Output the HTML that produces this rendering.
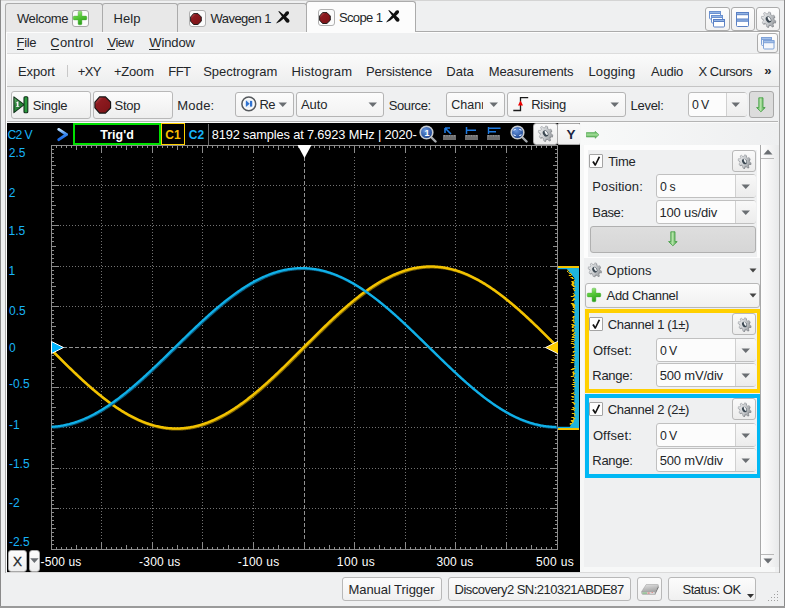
<!DOCTYPE html>
<html><head><meta charset="utf-8"><style>
html,body{margin:0;padding:0;}
body{width:785px;height:608px;overflow:hidden;position:relative;background:#eff0f1;font-family:"Liberation Sans", sans-serif;}
.t{position:absolute;white-space:nowrap;line-height:16px;}
</style></head><body>
<div style="position:absolute;left:0;top:0;width:785px;height:1px;background:#d4d4d4"></div><div style="position:absolute;left:0px;top:0px;width:1px;height:608px;background:#8a8a8a"></div><div style="position:absolute;left:784px;top:0px;width:1px;height:608px;background:#8a8a8a"></div><div style="position:absolute;left:0px;top:606px;width:785px;height:2px;background:#9a9a9a"></div><div style="position:absolute;left:5px;top:31px;width:775px;height:1px;background:#ababab"></div><div style="position:absolute;left:5px;top:31px;width:1px;height:542px;background:#ababab"></div><div style="position:absolute;left:779px;top:31px;width:1px;height:542px;background:#ababab"></div><div style="position:absolute;left:6px;top:32px;width:773px;height:1px;background:#fdfdfd"></div><div style="position:absolute;left:6px;top:32px;width:1px;height:540px;background:#fdfdfd"></div><div style="position:absolute;left:5px;top:3px;width:98px;height:29px;background:#e8e8e8;border:1px solid #ababab;border-bottom:none;border-radius:3px 3px 0 0;box-sizing:border-box"></div><div style="position:absolute;left:102px;top:3px;width:76px;height:29px;background:#e8e8e8;border:1px solid #ababab;border-bottom:none;border-radius:3px 3px 0 0;box-sizing:border-box"></div><div style="position:absolute;left:177px;top:3px;width:130px;height:29px;background:#e8e8e8;border:1px solid #ababab;border-bottom:none;border-radius:3px 3px 0 0;box-sizing:border-box"></div><div style="position:absolute;left:306px;top:1px;width:110px;height:31px;background:#fcfcfc;border:1px solid #ababab;border-bottom:none;border-radius:3px 3px 0 0;box-sizing:border-box"></div><div style="position:absolute;left:307px;top:31px;width:108px;height:2px;background:#fcfcfc"></div><div class="t" style="left:17.00px;top:10.50px;font-size:13.00px;color:#232629;letter-spacing:-0.412px;">Welcome</div><div class="t" style="left:113.56px;top:10.50px;font-size:13.00px;color:#232629;letter-spacing:0.058px;">Help</div><div class="t" style="left:210.40px;top:10.50px;font-size:13.00px;color:#232629;letter-spacing:-0.510px;">Wavegen 1</div><div class="t" style="left:338.88px;top:9.50px;font-size:13.00px;color:#232629;letter-spacing:-0.600px;">Scope 1</div><div style="position:absolute;left:72px;top:10px;width:17px;height:17px;box-sizing:border-box;border:1px solid #a8a8a8;border-radius:3px;background:#fbfbfb"><svg width="16" height="16" viewBox="0 0 16 16" style="position:absolute;left:-0.8px;top:-1.5px">
<defs><linearGradient id="pg1" x1="0" y1="0" x2="0.4" y2="1"><stop offset="0" stop-color="#b8f0a0"/><stop offset="0.45" stop-color="#5ccc3c"/><stop offset="1" stop-color="#2ca01c"/></linearGradient></defs>
<path d="M6.1 2.2 Q6.1 1.2 7.1 1.2 H8.9 Q9.9 1.2 9.9 2.2 V6.1 H13.8 Q14.8 6.1 14.8 7.1 V8.9 Q14.8 9.9 13.8 9.9 H9.9 V13.8 Q9.9 14.8 8.9 14.8 H7.1 Q6.1 14.8 6.1 13.8 V9.9 H2.2 Q1.2 9.9 1.2 8.9 V7.1 Q1.2 6.1 2.2 6.1 H6.1 Z" fill="url(#pg1)" stroke="#44a830" stroke-width="0.4"/></svg></div><div style="position:absolute;left:189px;top:10px;width:17px;height:17px;box-sizing:border-box;border:1px solid #b0b0b0;border-radius:3px;background:#fbfbfb"><svg width="12" height="12" viewBox="0 0 12 12" style="position:absolute;left:-0.4px;top:2px">
<defs><linearGradient id="rg1" x1="0" y1="0" x2="0.8" y2="0.9"><stop offset="0" stop-color="#d07070"/><stop offset="0.35" stop-color="#8e1a20"/><stop offset="1" stop-color="#7e1418"/></linearGradient></defs>
<path d="M3.6 0.6 H7.9 L11.3 4 V8.2 L7.9 11.5 H3.6 L0.6 8.2 V4 Z" fill="url(#rg1)" stroke="#111" stroke-width="0.9"/></svg></div><div style="position:absolute;left:318px;top:9px;width:17px;height:17px;box-sizing:border-box;border:1px solid #b0b0b0;border-radius:3px;background:#fbfbfb"><svg width="12" height="12" viewBox="0 0 12 12" style="position:absolute;left:-0.4px;top:2px">
<defs><linearGradient id="rg2" x1="0" y1="0" x2="0.8" y2="0.9"><stop offset="0" stop-color="#d07070"/><stop offset="0.35" stop-color="#8e1a20"/><stop offset="1" stop-color="#7e1418"/></linearGradient></defs>
<path d="M3.6 0.6 H7.9 L11.3 4 V8.2 L7.9 11.5 H3.6 L0.6 8.2 V4 Z" fill="url(#rg2)" stroke="#111" stroke-width="0.9"/></svg></div><svg width="15" height="13" viewBox="0 0 15 13" style="position:absolute;left:276px;top:11px">
<path d="M2.2 0.3 L3.4 0.2 L12.6 8.0 Q14.4 10.2 12.6 11.6 Q10.8 12.4 9.6 10.4 Z" fill="#111"/>
<path d="M11.4 0.3 Q13.6 0.2 13 2.6 Q12.4 4 10.6 5.2 L4.2 10.6 L0.2 12.4 L0.8 11.2 L8.6 2.4 Q9.8 0.4 11.4 0.3 Z" fill="#111"/></svg><svg width="15" height="13" viewBox="0 0 15 13" style="position:absolute;left:386px;top:10px">
<path d="M2.2 0.3 L3.4 0.2 L12.6 8.0 Q14.4 10.2 12.6 11.6 Q10.8 12.4 9.6 10.4 Z" fill="#111"/>
<path d="M11.4 0.3 Q13.6 0.2 13 2.6 Q12.4 4 10.6 5.2 L4.2 10.6 L0.2 12.4 L0.8 11.2 L8.6 2.4 Q9.8 0.4 11.4 0.3 Z" fill="#111"/></svg><div style="position:absolute;left:705px;top:7px;width:25px;height:24px;box-sizing:border-box;border:1px solid #ababab;border-radius:3px;background:linear-gradient(#fdfdfd,#f2f2f2)"><svg width="22" height="22" viewBox="0 0 22 22" style="position:absolute;left:0;top:0">
<g stroke="#6a90d0" stroke-width="1">
<rect x="3.5" y="3.5" width="11" height="7.5" rx="1" fill="#fff"/><rect x="3.5" y="3.5" width="11" height="2" fill="#92b4e4"/>
<rect x="5.5" y="7.5" width="11" height="7.5" rx="1" fill="#fff"/><rect x="5.5" y="7.5" width="11" height="2" fill="#92b4e4"/>
<rect x="7.5" y="11.5" width="11" height="7.5" rx="1" fill="#fff" stroke="#5a80c4"/><rect x="7.5" y="11.5" width="11" height="2" fill="#92b4e4" stroke="#5a80c4"/>
</g></svg></div><div style="position:absolute;left:731px;top:7px;width:24px;height:24px;box-sizing:border-box;border:1px solid #ababab;border-radius:3px;background:linear-gradient(#fdfdfd,#f2f2f2)"><svg width="22" height="22" viewBox="0 0 22 22" style="position:absolute;left:0;top:0">
<g stroke="#5a80c4" stroke-width="1">
<rect x="4.5" y="4.5" width="12" height="14" rx="1" fill="#fff"/>
<rect x="4.5" y="4.5" width="12" height="2.2" fill="#92b4e4"/><rect x="4.5" y="11" width="12" height="2.2" fill="#92b4e4"/>
</g></svg></div><div style="position:absolute;left:756px;top:7px;width:24px;height:24px;box-sizing:border-box;border:1px solid #ababab;border-radius:3px;background:linear-gradient(#fdfdfd,#f2f2f2)"><svg width="17" height="17" viewBox="0 0 17 17" style="position:absolute;left:2.5px;top:2.5px"><defs><linearGradient id="gtr" x1="0.1" y1="0" x2="0.9" y2="1"><stop offset="0" stop-color="#f4f5f6"/><stop offset="0.5" stop-color="#c8cbce"/><stop offset="1" stop-color="#8c9094"/></linearGradient></defs><g transform="translate(0.5 0.7)"><path d="M5.87 -1.41 L7.92 -1.06 L7.92 1.06 L5.87 1.41 L5.15 3.15 L6.35 4.85 L4.85 6.35 L3.15 5.15 L1.41 5.87 L1.06 7.92 L-1.06 7.92 L-1.41 5.87 L-3.15 5.15 L-4.85 6.35 L-6.35 4.85 L-5.15 3.15 L-5.87 1.41 L-7.92 1.06 L-7.92 -1.06 L-5.87 -1.41 L-5.15 -3.15 L-6.35 -4.85 L-4.85 -6.35 L-3.15 -5.15 L-1.41 -5.87 L-1.06 -7.92 L1.06 -7.92 L1.41 -5.87 L3.15 -5.15 L4.85 -6.35 L6.35 -4.85 L5.15 -3.15Z" transform="translate(8.50 8.50) rotate(-32) scale(0.86 1)" fill="#5e6266" opacity="0.8"/></g><path d="M5.87 -1.41 L7.92 -1.06 L7.92 1.06 L5.87 1.41 L5.15 3.15 L6.35 4.85 L4.85 6.35 L3.15 5.15 L1.41 5.87 L1.06 7.92 L-1.06 7.92 L-1.41 5.87 L-3.15 5.15 L-4.85 6.35 L-6.35 4.85 L-5.15 3.15 L-5.87 1.41 L-7.92 1.06 L-7.92 -1.06 L-5.87 -1.41 L-5.15 -3.15 L-6.35 -4.85 L-4.85 -6.35 L-3.15 -5.15 L-1.41 -5.87 L-1.06 -7.92 L1.06 -7.92 L1.41 -5.87 L3.15 -5.15 L4.85 -6.35 L6.35 -4.85 L5.15 -3.15Z" transform="translate(8.50 8.50) rotate(-32) scale(0.86 1)" fill="url(#gtr)" stroke="#9a9ea2" stroke-width="0.6" stroke-linejoin="round"/><g transform="translate(8.50 8.50) rotate(-32) scale(0.86 1)"><ellipse cx="0" cy="0" rx="2.89" ry="3.32" fill="#3c4852"/><ellipse cx="1.10" cy="-0.14" rx="1.30" ry="2.46" fill="#f2f4f6"/></g></svg></div><div style="position:absolute;left:7px;top:33px;width:772px;height:21px;background:#eff0f1"></div><div style="position:absolute;left:7px;top:53px;width:772px;height:1px;background:#dcdcdc"></div><div class="t" style="left:16.56px;top:35.10px;font-size:13.00px;color:#232629;letter-spacing:-0.346px;">File</div><div class="t" style="left:50.35px;top:35.10px;font-size:13.00px;color:#232629;letter-spacing:0.175px;">Control</div><div class="t" style="left:107.50px;top:35.10px;font-size:13.00px;color:#232629;letter-spacing:-0.515px;">View</div><div class="t" style="left:149.30px;top:35.10px;font-size:13.00px;color:#232629;letter-spacing:-0.128px;">Window</div><div style="position:absolute;left:17px;top:49px;width:7px;height:1px;background:#232629"></div><div style="position:absolute;left:51px;top:49px;width:8px;height:1px;background:#232629"></div><div style="position:absolute;left:107px;top:49px;width:8px;height:1px;background:#232629"></div><div style="position:absolute;left:149px;top:49px;width:11px;height:1px;background:#232629"></div><div style="position:absolute;left:757px;top:33px;width:21px;height:20px;box-sizing:border-box;border:1px solid #ababab;border-radius:3px;background:linear-gradient(#fdfdfd,#f2f2f2)"><svg width="19" height="18" viewBox="0 0 19 18" style="position:absolute;left:0;top:0">
<g stroke="#7ea2d8" stroke-width="1">
<rect x="3.5" y="3.5" width="10" height="8" rx="1" fill="#eef3fb"/><rect x="3.5" y="3.5" width="10" height="2" fill="#a4c0e8"/>
<rect x="5.5" y="6.5" width="10.5" height="8.5" rx="1" fill="#f4f7fc"/><rect x="5.5" y="6.5" width="10.5" height="2.2" fill="#a4c0e8"/>
</g></svg></div><div style="position:absolute;left:7px;top:54px;width:772px;height:32px;background:linear-gradient(#fbfbfb,#eceded)"></div><div style="position:absolute;left:7px;top:86px;width:772px;height:1px;background:#c4c4c4"></div><div style="position:absolute;left:67px;top:65px;width:1px;height:12px;background:#c8c8c8"></div><div class="t" style="left:17.96px;top:63.50px;font-size:13.00px;color:#232629;letter-spacing:-0.112px;">Export</div><div class="t" style="left:77.78px;top:63.50px;font-size:13.00px;color:#232629;letter-spacing:-0.600px;">+XY</div><div class="t" style="left:113.88px;top:63.50px;font-size:13.00px;color:#232629;letter-spacing:-0.171px;">+Zoom</div><div class="t" style="left:168.36px;top:63.50px;font-size:13.00px;color:#232629;letter-spacing:-0.600px;">FFT</div><div class="t" style="left:203.18px;top:63.50px;font-size:13.00px;color:#232629;letter-spacing:-0.038px;">Spectrogram</div><div class="t" style="left:291.56px;top:63.50px;font-size:13.00px;color:#232629;letter-spacing:0.153px;">Histogram</div><div class="t" style="left:366.06px;top:63.50px;font-size:13.00px;color:#232629;letter-spacing:-0.181px;">Persistence</div><div class="t" style="left:446.26px;top:63.50px;font-size:13.00px;color:#232629;letter-spacing:0.010px;">Data</div><div class="t" style="left:488.66px;top:63.50px;font-size:13.00px;color:#232629;letter-spacing:-0.095px;">Measurements</div><div class="t" style="left:588.56px;top:63.50px;font-size:13.00px;color:#232629;letter-spacing:0.084px;">Logging</div><div class="t" style="left:651.00px;top:63.50px;font-size:13.00px;color:#232629;letter-spacing:-0.245px;">Audio</div><div class="t" style="left:698.44px;top:63.50px;font-size:13.00px;color:#232629;letter-spacing:-0.480px;">X Cursors</div><div class="t" style="left:764.28px;top:63.00px;font-size:13.00px;color:#232629;font-weight:bold;letter-spacing:0.000px;">&#187;</div><div style="position:absolute;left:7px;top:87px;width:772px;height:36px;background:#eff0f1"></div><div style="position:absolute;left:11px;top:91px;width:80px;height:28px;box-sizing:border-box;border:1px solid #b8b8b8;border-radius:3px;background:linear-gradient(#fcfcfc,#eeeeee)"></div><svg width="17" height="18" viewBox="0 0 17 18" style="position:absolute;left:13px;top:95.5px">
<defs><linearGradient id="sgg" x1="0" y1="0" x2="1" y2="1"><stop offset="0" stop-color="#7cbf7c"/><stop offset="0.35" stop-color="#2a8a3a"/><stop offset="1" stop-color="#1e7a2e"/></linearGradient></defs>
<path d="M0.9 0.9 L11.2 8.6 L0.9 16.6 Z" fill="url(#sgg)" stroke="#10301a" stroke-width="1.1" stroke-linejoin="round"/>
<rect x="11" y="0.8" width="3.8" height="16" rx="1" fill="#2a9a3c" stroke="#10301a" stroke-width="1.1"/>
<path d="M2.9 6.6 L4.6 5.3 H5.6 V10 H6.3 V11 H2.9 V10 H3.7 V7 L3 7.4 Z" fill="#fff" stroke="#244a2a" stroke-width="0.25"/></svg><div class="t" style="left:32.78px;top:97.60px;font-size:13.00px;color:#232629;letter-spacing:-0.289px;">Single</div><div style="position:absolute;left:93px;top:91px;width:80px;height:28px;box-sizing:border-box;border:1px solid #b8b8b8;border-radius:3px;background:linear-gradient(#fcfcfc,#eeeeee)"></div><svg width="18" height="18" viewBox="0 0 18 18" style="position:absolute;left:93.5px;top:95.5px">
<defs><linearGradient id="stg" x1="0" y1="0" x2="0.8" y2="0.9"><stop offset="0" stop-color="#d07070"/><stop offset="0.35" stop-color="#8e1a20"/><stop offset="1" stop-color="#7e1418"/></linearGradient></defs>
<path d="M5.6 0.9 H11.4 L16.6 6.1 V11.9 L11.4 17.1 H5.6 L0.9 11.9 V6.1 Z" fill="url(#stg)" stroke="#111" stroke-width="1.1"/></svg><div class="t" style="left:114.48px;top:97.60px;font-size:13.00px;color:#232629;letter-spacing:-0.251px;">Stop</div><div class="t" style="left:177.36px;top:97.60px;font-size:13.00px;color:#232629;letter-spacing:0.163px;">Mode:</div><div style="position:absolute;left:235px;top:92px;width:59px;height:25px;box-sizing:border-box;border:1px solid #b4b4b4;border-radius:3px;background:linear-gradient(#fcfcfc,#f2f2f2)"></div><div class="t" style="left:259.56px;top:96.60px;font-size:13.00px;color:#232629;letter-spacing:-0.600px;">Re</div><svg width="10" height="6" viewBox="0 0 10 6" style="position:absolute;left:278px;top:102px"><path d="M0.5 0.5 H9 L4.75 5 Z" fill="#6a6e72"/></svg><svg width="17" height="17" viewBox="0 0 17 17" style="position:absolute;left:240px;top:96px">
<circle cx="8.8" cy="7.9" r="6.9" fill="#fafafa" stroke="#55595d" stroke-width="1.5"/>
<circle cx="8.7" cy="7.9" r="4.2" fill="#e8f0fa"/><path d="M5.9 4.2 L9.7 7.7 L5.9 11.1 Z" fill="#2f72d0"/><rect x="10" y="4.9" width="2.2" height="5.7" fill="#2f72d0"/></svg><div style="position:absolute;left:296px;top:92px;width:88px;height:25px;box-sizing:border-box;border:1px solid #b4b4b4;border-radius:3px;background:linear-gradient(#fcfcfc,#f2f2f2)"></div><div class="t" style="left:300.90px;top:96.60px;font-size:13.00px;color:#232629;letter-spacing:-0.024px;">Auto</div><svg width="10" height="6" viewBox="0 0 10 6" style="position:absolute;left:368px;top:102px"><path d="M0.5 0.5 H9 L4.75 5 Z" fill="#6a6e72"/></svg><div class="t" style="left:388.68px;top:97.60px;font-size:13.00px;color:#232629;letter-spacing:-0.390px;">Source:</div><div style="position:absolute;left:446px;top:92px;width:59px;height:25px;box-sizing:border-box;border:1px solid #b4b4b4;border-radius:3px;background:linear-gradient(#fcfcfc,#f2f2f2)"></div><svg width="10" height="6" viewBox="0 0 10 6" style="position:absolute;left:489px;top:102px"><path d="M0.5 0.5 H9 L4.75 5 Z" fill="#6a6e72"/></svg><div class="t" style="left:451.3px;top:96.5px;width:32px;overflow:hidden;font-size:12.5px;line-height:16px;color:#232629">Channel</div><div style="position:absolute;left:507px;top:92px;width:119px;height:25px;box-sizing:border-box;border:1px solid #b4b4b4;border-radius:3px;background:linear-gradient(#fcfcfc,#f2f2f2)"></div><div class="t" style="left:531.16px;top:96.60px;font-size:13.00px;color:#232629;letter-spacing:-0.191px;">Rising</div><svg width="10" height="6" viewBox="0 0 10 6" style="position:absolute;left:610px;top:102px"><path d="M0.5 0.5 H9 L4.75 5 Z" fill="#6a6e72"/></svg><svg width="17" height="16" viewBox="0 0 17 16" style="position:absolute;left:513px;top:96px">
<path d="M0.3 14.5 H7.5 V1.6 H15.2" stroke="#1a1a1a" stroke-width="1.3" fill="none"/>
<path d="M7.5 4.6 L5 9.6 H10 Z" fill="#f00000"/></svg><div class="t" style="left:630.46px;top:97.60px;font-size:13.00px;color:#232629;letter-spacing:-0.262px;">Level:</div><div style="position:absolute;left:688px;top:92px;width:59px;height:25px;box-sizing:border-box;border:1px solid #bcbcbc;border-radius:3px;background:#fcfcfc"></div><div style="position:absolute;left:726px;top:93px;width:20px;height:23px;background:linear-gradient(#f8f8f8,#eeeeee);border-left:1px solid #d0d0d0;border-radius:0 2px 2px 0"></div><svg width="10" height="6" viewBox="0 0 10 6" style="position:absolute;left:731px;top:102px"><path d="M0.5 0.5 H9 L4.75 5 Z" fill="#6a6e72"/></svg><div class="t" style="left:691.93px;top:96.84px;font-size:12.30px;color:#232629;letter-spacing:-0.600px;">0 V</div><div style="position:absolute;left:749px;top:91px;width:25px;height:27px;box-sizing:border-box;border:1px solid #a8a8a8;border-radius:3px;background:#dcdcdc"></div><svg width="10" height="16" viewBox="0 0 10 16" style="position:absolute;left:756px;top:96.5px">
<defs><linearGradient id="dg1" x1="0" y1="0" x2="1" y2="0"><stop offset="0" stop-color="#4aa84a"/><stop offset="0.45" stop-color="#b4e4a8"/><stop offset="1" stop-color="#3a9a3a"/></linearGradient></defs>
<path d="M2.8 0.8 H7 V10.6 H9.2 L4.9 14.8 L0.6 10.6 H2.8 Z" fill="url(#dg1)" stroke="#3c9a3c" stroke-width="0.8" stroke-linejoin="round"/></svg><div style="position:absolute;left:7px;top:121px;width:771px;height:1px;background:#b4b4b4"></div><div style="position:absolute;left:7px;top:122px;width:771px;height:1px;background:#fafafa"></div><div style="position:absolute;left:7px;top:123px;width:573px;height:449px;background:#000"></div><svg width="785" height="608" viewBox="0 0 785 608" style="position:absolute;left:0;top:0"><line x1="101.5" y1="157" x2="101.5" y2="541" stroke="#727272" stroke-width="1" stroke-dasharray="1 2"/><line x1="152.5" y1="157" x2="152.5" y2="541" stroke="#727272" stroke-width="1" stroke-dasharray="1 2"/><line x1="202.5" y1="157" x2="202.5" y2="541" stroke="#727272" stroke-width="1" stroke-dasharray="1 2"/><line x1="253.5" y1="157" x2="253.5" y2="541" stroke="#727272" stroke-width="1" stroke-dasharray="1 2"/><line x1="304.5" y1="157" x2="304.5" y2="541" stroke="#929292" stroke-width="1" stroke-dasharray="4 2"/><line x1="354.5" y1="157" x2="354.5" y2="541" stroke="#727272" stroke-width="1" stroke-dasharray="1 2"/><line x1="405.5" y1="157" x2="405.5" y2="541" stroke="#727272" stroke-width="1" stroke-dasharray="1 2"/><line x1="455.5" y1="157" x2="455.5" y2="541" stroke="#727272" stroke-width="1" stroke-dasharray="1 2"/><line x1="506.5" y1="157" x2="506.5" y2="541" stroke="#727272" stroke-width="1" stroke-dasharray="1 2"/><line x1="60" y1="185.5" x2="549" y2="185.5" stroke="#727272" stroke-width="1" stroke-dasharray="1 2"/><line x1="60" y1="225.5" x2="549" y2="225.5" stroke="#727272" stroke-width="1" stroke-dasharray="1 2"/><line x1="60" y1="266.5" x2="549" y2="266.5" stroke="#727272" stroke-width="1" stroke-dasharray="1 2"/><line x1="60" y1="306.5" x2="549" y2="306.5" stroke="#727272" stroke-width="1" stroke-dasharray="1 2"/><line x1="63" y1="347.5" x2="549" y2="347.5" stroke="#929292" stroke-width="1" stroke-dasharray="4 2"/><line x1="60" y1="387.5" x2="549" y2="387.5" stroke="#727272" stroke-width="1" stroke-dasharray="1 2"/><line x1="60" y1="427.5" x2="549" y2="427.5" stroke="#727272" stroke-width="1" stroke-dasharray="1 2"/><line x1="60" y1="468.5" x2="549" y2="468.5" stroke="#727272" stroke-width="1" stroke-dasharray="1 2"/><line x1="60" y1="508.5" x2="549" y2="508.5" stroke="#727272" stroke-width="1" stroke-dasharray="1 2"/><rect x="51.5" y="145.5" width="506" height="404" fill="none" stroke="#8c8c8c" stroke-width="1"/><path d="M51.5 145 v8 M51.5 550 v-8 M56.5 145 v3 M56.5 550 v-3 M61.5 145 v3 M61.5 550 v-3 M66.5 145 v3 M66.5 550 v-3 M71.5 145 v3 M71.5 550 v-3 M76.5 145 v5 M76.5 550 v-5 M81.5 145 v3 M81.5 550 v-3 M86.5 145 v3 M86.5 550 v-3 M91.5 145 v3 M91.5 550 v-3 M96.5 145 v3 M96.5 550 v-3 M101.5 145 v8 M101.5 550 v-8 M106.5 145 v3 M106.5 550 v-3 M111.5 145 v3 M111.5 550 v-3 M116.5 145 v3 M116.5 550 v-3 M121.5 145 v3 M121.5 550 v-3 M126.5 145 v5 M126.5 550 v-5 M131.5 145 v3 M131.5 550 v-3 M137.5 145 v3 M137.5 550 v-3 M142.5 145 v3 M142.5 550 v-3 M147.5 145 v3 M147.5 550 v-3 M152.5 145 v8 M152.5 550 v-8 M157.5 145 v3 M157.5 550 v-3 M162.5 145 v3 M162.5 550 v-3 M167.5 145 v3 M167.5 550 v-3 M172.5 145 v3 M172.5 550 v-3 M177.5 145 v5 M177.5 550 v-5 M182.5 145 v3 M182.5 550 v-3 M187.5 145 v3 M187.5 550 v-3 M192.5 145 v3 M192.5 550 v-3 M197.5 145 v3 M197.5 550 v-3 M202.5 145 v8 M202.5 550 v-8 M207.5 145 v3 M207.5 550 v-3 M212.5 145 v3 M212.5 550 v-3 M217.5 145 v3 M217.5 550 v-3 M223.5 145 v3 M223.5 550 v-3 M228.5 145 v5 M228.5 550 v-5 M233.5 145 v3 M233.5 550 v-3 M238.5 145 v3 M238.5 550 v-3 M243.5 145 v3 M243.5 550 v-3 M248.5 145 v3 M248.5 550 v-3 M253.5 145 v8 M253.5 550 v-8 M258.5 145 v3 M258.5 550 v-3 M263.5 145 v3 M263.5 550 v-3 M268.5 145 v3 M268.5 550 v-3 M273.5 145 v3 M273.5 550 v-3 M278.5 145 v5 M278.5 550 v-5 M283.5 145 v3 M283.5 550 v-3 M288.5 145 v3 M288.5 550 v-3 M293.5 145 v3 M293.5 550 v-3 M298.5 145 v3 M298.5 550 v-3 M304.5 145 v8 M304.5 550 v-8 M309.5 145 v3 M309.5 550 v-3 M314.5 145 v3 M314.5 550 v-3 M319.5 145 v3 M319.5 550 v-3 M324.5 145 v3 M324.5 550 v-3 M329.5 145 v5 M329.5 550 v-5 M334.5 145 v3 M334.5 550 v-3 M339.5 145 v3 M339.5 550 v-3 M344.5 145 v3 M344.5 550 v-3 M349.5 145 v3 M349.5 550 v-3 M354.5 145 v8 M354.5 550 v-8 M359.5 145 v3 M359.5 550 v-3 M364.5 145 v3 M364.5 550 v-3 M369.5 145 v3 M369.5 550 v-3 M374.5 145 v3 M374.5 550 v-3 M379.5 145 v5 M379.5 550 v-5 M384.5 145 v3 M384.5 550 v-3 M390.5 145 v3 M390.5 550 v-3 M395.5 145 v3 M395.5 550 v-3 M400.5 145 v3 M400.5 550 v-3 M405.5 145 v8 M405.5 550 v-8 M410.5 145 v3 M410.5 550 v-3 M415.5 145 v3 M415.5 550 v-3 M420.5 145 v3 M420.5 550 v-3 M425.5 145 v3 M425.5 550 v-3 M430.5 145 v5 M430.5 550 v-5 M435.5 145 v3 M435.5 550 v-3 M440.5 145 v3 M440.5 550 v-3 M445.5 145 v3 M445.5 550 v-3 M450.5 145 v3 M450.5 550 v-3 M455.5 145 v8 M455.5 550 v-8 M460.5 145 v3 M460.5 550 v-3 M465.5 145 v3 M465.5 550 v-3 M470.5 145 v3 M470.5 550 v-3 M476.5 145 v3 M476.5 550 v-3 M481.5 145 v5 M481.5 550 v-5 M486.5 145 v3 M486.5 550 v-3 M491.5 145 v3 M491.5 550 v-3 M496.5 145 v3 M496.5 550 v-3 M501.5 145 v3 M501.5 550 v-3 M506.5 145 v8 M506.5 550 v-8 M511.5 145 v3 M511.5 550 v-3 M516.5 145 v3 M516.5 550 v-3 M521.5 145 v3 M521.5 550 v-3 M526.5 145 v3 M526.5 550 v-3 M531.5 145 v5 M531.5 550 v-5 M536.5 145 v3 M536.5 550 v-3 M541.5 145 v3 M541.5 550 v-3 M546.5 145 v3 M546.5 550 v-3 M551.5 145 v3 M551.5 550 v-3 M557.5 145 v8 M557.5 550 v-8 M51 145.5 h8 M558 145.5 h-8 M51 149.5 h3 M558 149.5 h-3 M51 153.5 h3 M558 153.5 h-3 M51 157.5 h3 M558 157.5 h-3 M51 161.5 h3 M558 161.5 h-3 M51 165.5 h5 M558 165.5 h-5 M51 169.5 h3 M558 169.5 h-3 M51 173.5 h3 M558 173.5 h-3 M51 177.5 h3 M558 177.5 h-3 M51 181.5 h3 M558 181.5 h-3 M51 185.5 h8 M558 185.5 h-8 M51 189.5 h3 M558 189.5 h-3 M51 193.5 h3 M558 193.5 h-3 M51 197.5 h3 M558 197.5 h-3 M51 201.5 h3 M558 201.5 h-3 M51 205.5 h5 M558 205.5 h-5 M51 209.5 h3 M558 209.5 h-3 M51 213.5 h3 M558 213.5 h-3 M51 217.5 h3 M558 217.5 h-3 M51 221.5 h3 M558 221.5 h-3 M51 225.5 h8 M558 225.5 h-8 M51 229.5 h3 M558 229.5 h-3 M51 233.5 h3 M558 233.5 h-3 M51 237.5 h3 M558 237.5 h-3 M51 241.5 h3 M558 241.5 h-3 M51 246.5 h5 M558 246.5 h-5 M51 250.5 h3 M558 250.5 h-3 M51 254.5 h3 M558 254.5 h-3 M51 258.5 h3 M558 258.5 h-3 M51 262.5 h3 M558 262.5 h-3 M51 266.5 h8 M558 266.5 h-8 M51 270.5 h3 M558 270.5 h-3 M51 274.5 h3 M558 274.5 h-3 M51 278.5 h3 M558 278.5 h-3 M51 282.5 h3 M558 282.5 h-3 M51 286.5 h5 M558 286.5 h-5 M51 290.5 h3 M558 290.5 h-3 M51 294.5 h3 M558 294.5 h-3 M51 298.5 h3 M558 298.5 h-3 M51 302.5 h3 M558 302.5 h-3 M51 306.5 h8 M558 306.5 h-8 M51 310.5 h3 M558 310.5 h-3 M51 314.5 h3 M558 314.5 h-3 M51 318.5 h3 M558 318.5 h-3 M51 322.5 h3 M558 322.5 h-3 M51 326.5 h5 M558 326.5 h-5 M51 330.5 h3 M558 330.5 h-3 M51 334.5 h3 M558 334.5 h-3 M51 338.5 h3 M558 338.5 h-3 M51 342.5 h3 M558 342.5 h-3 M51 347.5 h8 M558 347.5 h-8 M51 351.5 h3 M558 351.5 h-3 M51 355.5 h3 M558 355.5 h-3 M51 359.5 h3 M558 359.5 h-3 M51 363.5 h3 M558 363.5 h-3 M51 367.5 h5 M558 367.5 h-5 M51 371.5 h3 M558 371.5 h-3 M51 375.5 h3 M558 375.5 h-3 M51 379.5 h3 M558 379.5 h-3 M51 383.5 h3 M558 383.5 h-3 M51 387.5 h8 M558 387.5 h-8 M51 391.5 h3 M558 391.5 h-3 M51 395.5 h3 M558 395.5 h-3 M51 399.5 h3 M558 399.5 h-3 M51 403.5 h3 M558 403.5 h-3 M51 407.5 h5 M558 407.5 h-5 M51 411.5 h3 M558 411.5 h-3 M51 415.5 h3 M558 415.5 h-3 M51 419.5 h3 M558 419.5 h-3 M51 423.5 h3 M558 423.5 h-3 M51 427.5 h8 M558 427.5 h-8 M51 431.5 h3 M558 431.5 h-3 M51 435.5 h3 M558 435.5 h-3 M51 439.5 h3 M558 439.5 h-3 M51 443.5 h3 M558 443.5 h-3 M51 448.5 h5 M558 448.5 h-5 M51 452.5 h3 M558 452.5 h-3 M51 456.5 h3 M558 456.5 h-3 M51 460.5 h3 M558 460.5 h-3 M51 464.5 h3 M558 464.5 h-3 M51 468.5 h8 M558 468.5 h-8 M51 472.5 h3 M558 472.5 h-3 M51 476.5 h3 M558 476.5 h-3 M51 480.5 h3 M558 480.5 h-3 M51 484.5 h3 M558 484.5 h-3 M51 488.5 h5 M558 488.5 h-5 M51 492.5 h3 M558 492.5 h-3 M51 496.5 h3 M558 496.5 h-3 M51 500.5 h3 M558 500.5 h-3 M51 504.5 h3 M558 504.5 h-3 M51 508.5 h8 M558 508.5 h-8 M51 512.5 h3 M558 512.5 h-3 M51 516.5 h3 M558 516.5 h-3 M51 520.5 h3 M558 520.5 h-3 M51 524.5 h3 M558 524.5 h-3 M51 528.5 h5 M558 528.5 h-5 M51 532.5 h3 M558 532.5 h-3 M51 536.5 h3 M558 536.5 h-3 M51 540.5 h3 M558 540.5 h-3 M51 544.5 h3 M558 544.5 h-3 M51 549.5 h8 M558 549.5 h-8" stroke="#8c8c8c" stroke-width="1" fill="none"/><polyline points="51.5,350.00 52.5,351.00 53.5,352.00 54.5,353.00 55.5,353.99 56.5,354.99 57.5,355.98 58.5,356.98 59.5,357.97 60.5,358.96 61.5,359.95 62.5,360.94 63.5,361.92 64.5,362.90 65.5,363.88 66.5,364.86 67.5,365.84 68.5,366.81 69.5,367.78 70.5,368.75 71.5,369.71 72.5,370.67 73.5,371.63 74.5,372.58 75.5,373.53 76.5,374.47 77.5,375.41 78.5,376.35 79.5,377.28 80.5,378.21 81.5,379.13 82.5,380.05 83.5,380.96 84.5,381.87 85.5,382.77 86.5,383.67 87.5,384.56 88.5,385.45 89.5,386.33 90.5,387.20 91.5,388.07 92.5,388.93 93.5,389.79 94.5,390.64 95.5,391.48 96.5,392.32 97.5,393.15 98.5,393.97 99.5,394.79 100.5,395.59 101.5,396.40 102.5,397.19 103.5,397.97 104.5,398.75 105.5,399.52 106.5,400.29 107.5,401.04 108.5,401.79 109.5,402.52 110.5,403.25 111.5,403.97 112.5,404.69 113.5,405.39 114.5,406.09 115.5,406.77 116.5,407.45 117.5,408.12 118.5,408.78 119.5,409.42 120.5,410.06 121.5,410.69 122.5,411.32 123.5,411.93 124.5,412.53 125.5,413.12 126.5,413.70 127.5,414.27 128.5,414.83 129.5,415.38 130.5,415.92 131.5,416.45 132.5,416.97 133.5,417.48 134.5,417.98 135.5,418.47 136.5,418.94 137.5,419.41 138.5,419.86 139.5,420.31 140.5,420.74 141.5,421.16 142.5,421.57 143.5,421.97 144.5,422.36 145.5,422.73 146.5,423.10 147.5,423.45 148.5,423.79 149.5,424.12 150.5,424.44 151.5,424.75 152.5,425.04 153.5,425.33 154.5,425.60 155.5,425.86 156.5,426.10 157.5,426.34 158.5,426.56 159.5,426.77 160.5,426.97 161.5,427.16 162.5,427.34 163.5,427.50 164.5,427.65 165.5,427.79 166.5,427.91 167.5,428.03 168.5,428.13 169.5,428.22 170.5,428.30 171.5,428.36 172.5,428.41 173.5,428.45 174.5,428.48 175.5,428.50 176.5,428.50 177.5,428.49 178.5,428.47 179.5,428.43 180.5,428.39 181.5,428.33 182.5,428.26 183.5,428.18 184.5,428.08 185.5,427.97 186.5,427.85 187.5,427.72 188.5,427.58 189.5,427.42 190.5,427.25 191.5,427.07 192.5,426.88 193.5,426.67 194.5,426.45 195.5,426.22 196.5,425.98 197.5,425.73 198.5,425.46 199.5,425.19 200.5,424.90 201.5,424.60 202.5,424.28 203.5,423.96 204.5,423.62 205.5,423.28 206.5,422.92 207.5,422.55 208.5,422.17 209.5,421.77 210.5,421.37 211.5,420.95 212.5,420.52 213.5,420.09 214.5,419.64 215.5,419.18 216.5,418.71 217.5,418.22 218.5,417.73 219.5,417.23 220.5,416.71 221.5,416.19 222.5,415.65 223.5,415.11 224.5,414.55 225.5,413.99 226.5,413.41 227.5,412.82 228.5,412.23 229.5,411.62 230.5,411.01 231.5,410.38 232.5,409.75 233.5,409.10 234.5,408.45 235.5,407.78 236.5,407.11 237.5,406.43 238.5,405.74 239.5,405.04 240.5,404.33 241.5,403.62 242.5,402.89 243.5,402.16 244.5,401.41 245.5,400.66 246.5,399.91 247.5,399.14 248.5,398.36 249.5,397.58 250.5,396.79 251.5,396.00 252.5,395.19 253.5,394.38 254.5,393.56 255.5,392.73 256.5,391.90 257.5,391.06 258.5,390.22 259.5,389.36 260.5,388.50 261.5,387.64 262.5,386.77 263.5,385.89 264.5,385.01 265.5,384.12 266.5,383.22 267.5,382.32 268.5,381.42 269.5,380.51 270.5,379.59 271.5,378.67 272.5,377.75 273.5,376.82 274.5,375.88 275.5,374.94 276.5,374.00 277.5,373.05 278.5,372.10 279.5,371.15 280.5,370.19 281.5,369.23 282.5,368.26 283.5,367.30 284.5,366.32 285.5,365.35 286.5,364.37 287.5,363.39 288.5,362.41 289.5,361.43 290.5,360.44 291.5,359.45 292.5,358.46 293.5,357.47 294.5,356.48 295.5,355.49 296.5,354.49 297.5,353.49 298.5,352.50 299.5,351.50 300.5,350.50 301.5,349.50 302.5,348.50 303.5,347.50 304.5,346.50 305.5,345.50 306.5,344.50 307.5,343.50 308.5,342.50 309.5,341.51 310.5,340.51 311.5,339.51 312.5,338.52 313.5,337.53 314.5,336.54 315.5,335.55 316.5,334.56 317.5,333.57 318.5,332.59 319.5,331.61 320.5,330.63 321.5,329.65 322.5,328.68 323.5,327.70 324.5,326.74 325.5,325.77 326.5,324.81 327.5,323.85 328.5,322.90 329.5,321.95 330.5,321.00 331.5,320.06 332.5,319.12 333.5,318.18 334.5,317.25 335.5,316.33 336.5,315.41 337.5,314.49 338.5,313.58 339.5,312.68 340.5,311.78 341.5,310.88 342.5,309.99 343.5,309.11 344.5,308.23 345.5,307.36 346.5,306.50 347.5,305.64 348.5,304.78 349.5,303.94 350.5,303.10 351.5,302.27 352.5,301.44 353.5,300.62 354.5,299.81 355.5,299.00 356.5,298.21 357.5,297.42 358.5,296.64 359.5,295.86 360.5,295.09 361.5,294.34 362.5,293.59 363.5,292.84 364.5,292.11 365.5,291.38 366.5,290.67 367.5,289.96 368.5,289.26 369.5,288.57 370.5,287.89 371.5,287.22 372.5,286.55 373.5,285.90 374.5,285.25 375.5,284.62 376.5,283.99 377.5,283.38 378.5,282.77 379.5,282.18 380.5,281.59 381.5,281.01 382.5,280.45 383.5,279.89 384.5,279.35 385.5,278.81 386.5,278.29 387.5,277.77 388.5,277.27 389.5,276.78 390.5,276.29 391.5,275.82 392.5,275.36 393.5,274.91 394.5,274.48 395.5,274.05 396.5,273.63 397.5,273.23 398.5,272.83 399.5,272.45 400.5,272.08 401.5,271.72 402.5,271.38 403.5,271.04 404.5,270.72 405.5,270.40 406.5,270.10 407.5,269.81 408.5,269.54 409.5,269.27 410.5,269.02 411.5,268.78 412.5,268.55 413.5,268.33 414.5,268.12 415.5,267.93 416.5,267.75 417.5,267.58 418.5,267.42 419.5,267.28 420.5,267.15 421.5,267.03 422.5,266.92 423.5,266.82 424.5,266.74 425.5,266.67 426.5,266.61 427.5,266.57 428.5,266.53 429.5,266.51 430.5,266.50 431.5,266.50 432.5,266.52 433.5,266.55 434.5,266.59 435.5,266.64 436.5,266.70 437.5,266.78 438.5,266.87 439.5,266.97 440.5,267.09 441.5,267.21 442.5,267.35 443.5,267.50 444.5,267.66 445.5,267.84 446.5,268.03 447.5,268.23 448.5,268.44 449.5,268.66 450.5,268.90 451.5,269.14 452.5,269.40 453.5,269.67 454.5,269.96 455.5,270.25 456.5,270.56 457.5,270.88 458.5,271.21 459.5,271.55 460.5,271.90 461.5,272.27 462.5,272.64 463.5,273.03 464.5,273.43 465.5,273.84 466.5,274.26 467.5,274.69 468.5,275.14 469.5,275.59 470.5,276.06 471.5,276.53 472.5,277.02 473.5,277.52 474.5,278.03 475.5,278.55 476.5,279.08 477.5,279.62 478.5,280.17 479.5,280.73 480.5,281.30 481.5,281.88 482.5,282.47 483.5,283.07 484.5,283.68 485.5,284.31 486.5,284.94 487.5,285.58 488.5,286.22 489.5,286.88 490.5,287.55 491.5,288.23 492.5,288.91 493.5,289.61 494.5,290.31 495.5,291.03 496.5,291.75 497.5,292.48 498.5,293.21 499.5,293.96 500.5,294.71 501.5,295.48 502.5,296.25 503.5,297.03 504.5,297.81 505.5,298.60 506.5,299.41 507.5,300.21 508.5,301.03 509.5,301.85 510.5,302.68 511.5,303.52 512.5,304.36 513.5,305.21 514.5,306.07 515.5,306.93 516.5,307.80 517.5,308.67 518.5,309.55 519.5,310.44 520.5,311.33 521.5,312.23 522.5,313.13 523.5,314.04 524.5,314.95 525.5,315.87 526.5,316.79 527.5,317.72 528.5,318.65 529.5,319.59 530.5,320.53 531.5,321.47 532.5,322.42 533.5,323.37 534.5,324.33 535.5,325.29 536.5,326.25 537.5,327.22 538.5,328.19 539.5,329.16 540.5,330.14 541.5,331.12 542.5,332.10 543.5,333.08 544.5,334.06 545.5,335.05 546.5,336.04 547.5,337.03 548.5,338.02 549.5,339.02 550.5,340.01 551.5,341.01 552.5,342.00 553.5,343.00 554.5,344.00 555.5,345.00 556.5,346.00" fill="none" stroke="#7a6200" stroke-width="2.4" transform="translate(0.9 0.9)"/><polyline points="51.5,350.00 52.5,351.00 53.5,352.00 54.5,353.00 55.5,353.99 56.5,354.99 57.5,355.98 58.5,356.98 59.5,357.97 60.5,358.96 61.5,359.95 62.5,360.94 63.5,361.92 64.5,362.90 65.5,363.88 66.5,364.86 67.5,365.84 68.5,366.81 69.5,367.78 70.5,368.75 71.5,369.71 72.5,370.67 73.5,371.63 74.5,372.58 75.5,373.53 76.5,374.47 77.5,375.41 78.5,376.35 79.5,377.28 80.5,378.21 81.5,379.13 82.5,380.05 83.5,380.96 84.5,381.87 85.5,382.77 86.5,383.67 87.5,384.56 88.5,385.45 89.5,386.33 90.5,387.20 91.5,388.07 92.5,388.93 93.5,389.79 94.5,390.64 95.5,391.48 96.5,392.32 97.5,393.15 98.5,393.97 99.5,394.79 100.5,395.59 101.5,396.40 102.5,397.19 103.5,397.97 104.5,398.75 105.5,399.52 106.5,400.29 107.5,401.04 108.5,401.79 109.5,402.52 110.5,403.25 111.5,403.97 112.5,404.69 113.5,405.39 114.5,406.09 115.5,406.77 116.5,407.45 117.5,408.12 118.5,408.78 119.5,409.42 120.5,410.06 121.5,410.69 122.5,411.32 123.5,411.93 124.5,412.53 125.5,413.12 126.5,413.70 127.5,414.27 128.5,414.83 129.5,415.38 130.5,415.92 131.5,416.45 132.5,416.97 133.5,417.48 134.5,417.98 135.5,418.47 136.5,418.94 137.5,419.41 138.5,419.86 139.5,420.31 140.5,420.74 141.5,421.16 142.5,421.57 143.5,421.97 144.5,422.36 145.5,422.73 146.5,423.10 147.5,423.45 148.5,423.79 149.5,424.12 150.5,424.44 151.5,424.75 152.5,425.04 153.5,425.33 154.5,425.60 155.5,425.86 156.5,426.10 157.5,426.34 158.5,426.56 159.5,426.77 160.5,426.97 161.5,427.16 162.5,427.34 163.5,427.50 164.5,427.65 165.5,427.79 166.5,427.91 167.5,428.03 168.5,428.13 169.5,428.22 170.5,428.30 171.5,428.36 172.5,428.41 173.5,428.45 174.5,428.48 175.5,428.50 176.5,428.50 177.5,428.49 178.5,428.47 179.5,428.43 180.5,428.39 181.5,428.33 182.5,428.26 183.5,428.18 184.5,428.08 185.5,427.97 186.5,427.85 187.5,427.72 188.5,427.58 189.5,427.42 190.5,427.25 191.5,427.07 192.5,426.88 193.5,426.67 194.5,426.45 195.5,426.22 196.5,425.98 197.5,425.73 198.5,425.46 199.5,425.19 200.5,424.90 201.5,424.60 202.5,424.28 203.5,423.96 204.5,423.62 205.5,423.28 206.5,422.92 207.5,422.55 208.5,422.17 209.5,421.77 210.5,421.37 211.5,420.95 212.5,420.52 213.5,420.09 214.5,419.64 215.5,419.18 216.5,418.71 217.5,418.22 218.5,417.73 219.5,417.23 220.5,416.71 221.5,416.19 222.5,415.65 223.5,415.11 224.5,414.55 225.5,413.99 226.5,413.41 227.5,412.82 228.5,412.23 229.5,411.62 230.5,411.01 231.5,410.38 232.5,409.75 233.5,409.10 234.5,408.45 235.5,407.78 236.5,407.11 237.5,406.43 238.5,405.74 239.5,405.04 240.5,404.33 241.5,403.62 242.5,402.89 243.5,402.16 244.5,401.41 245.5,400.66 246.5,399.91 247.5,399.14 248.5,398.36 249.5,397.58 250.5,396.79 251.5,396.00 252.5,395.19 253.5,394.38 254.5,393.56 255.5,392.73 256.5,391.90 257.5,391.06 258.5,390.22 259.5,389.36 260.5,388.50 261.5,387.64 262.5,386.77 263.5,385.89 264.5,385.01 265.5,384.12 266.5,383.22 267.5,382.32 268.5,381.42 269.5,380.51 270.5,379.59 271.5,378.67 272.5,377.75 273.5,376.82 274.5,375.88 275.5,374.94 276.5,374.00 277.5,373.05 278.5,372.10 279.5,371.15 280.5,370.19 281.5,369.23 282.5,368.26 283.5,367.30 284.5,366.32 285.5,365.35 286.5,364.37 287.5,363.39 288.5,362.41 289.5,361.43 290.5,360.44 291.5,359.45 292.5,358.46 293.5,357.47 294.5,356.48 295.5,355.49 296.5,354.49 297.5,353.49 298.5,352.50 299.5,351.50 300.5,350.50 301.5,349.50 302.5,348.50 303.5,347.50 304.5,346.50 305.5,345.50 306.5,344.50 307.5,343.50 308.5,342.50 309.5,341.51 310.5,340.51 311.5,339.51 312.5,338.52 313.5,337.53 314.5,336.54 315.5,335.55 316.5,334.56 317.5,333.57 318.5,332.59 319.5,331.61 320.5,330.63 321.5,329.65 322.5,328.68 323.5,327.70 324.5,326.74 325.5,325.77 326.5,324.81 327.5,323.85 328.5,322.90 329.5,321.95 330.5,321.00 331.5,320.06 332.5,319.12 333.5,318.18 334.5,317.25 335.5,316.33 336.5,315.41 337.5,314.49 338.5,313.58 339.5,312.68 340.5,311.78 341.5,310.88 342.5,309.99 343.5,309.11 344.5,308.23 345.5,307.36 346.5,306.50 347.5,305.64 348.5,304.78 349.5,303.94 350.5,303.10 351.5,302.27 352.5,301.44 353.5,300.62 354.5,299.81 355.5,299.00 356.5,298.21 357.5,297.42 358.5,296.64 359.5,295.86 360.5,295.09 361.5,294.34 362.5,293.59 363.5,292.84 364.5,292.11 365.5,291.38 366.5,290.67 367.5,289.96 368.5,289.26 369.5,288.57 370.5,287.89 371.5,287.22 372.5,286.55 373.5,285.90 374.5,285.25 375.5,284.62 376.5,283.99 377.5,283.38 378.5,282.77 379.5,282.18 380.5,281.59 381.5,281.01 382.5,280.45 383.5,279.89 384.5,279.35 385.5,278.81 386.5,278.29 387.5,277.77 388.5,277.27 389.5,276.78 390.5,276.29 391.5,275.82 392.5,275.36 393.5,274.91 394.5,274.48 395.5,274.05 396.5,273.63 397.5,273.23 398.5,272.83 399.5,272.45 400.5,272.08 401.5,271.72 402.5,271.38 403.5,271.04 404.5,270.72 405.5,270.40 406.5,270.10 407.5,269.81 408.5,269.54 409.5,269.27 410.5,269.02 411.5,268.78 412.5,268.55 413.5,268.33 414.5,268.12 415.5,267.93 416.5,267.75 417.5,267.58 418.5,267.42 419.5,267.28 420.5,267.15 421.5,267.03 422.5,266.92 423.5,266.82 424.5,266.74 425.5,266.67 426.5,266.61 427.5,266.57 428.5,266.53 429.5,266.51 430.5,266.50 431.5,266.50 432.5,266.52 433.5,266.55 434.5,266.59 435.5,266.64 436.5,266.70 437.5,266.78 438.5,266.87 439.5,266.97 440.5,267.09 441.5,267.21 442.5,267.35 443.5,267.50 444.5,267.66 445.5,267.84 446.5,268.03 447.5,268.23 448.5,268.44 449.5,268.66 450.5,268.90 451.5,269.14 452.5,269.40 453.5,269.67 454.5,269.96 455.5,270.25 456.5,270.56 457.5,270.88 458.5,271.21 459.5,271.55 460.5,271.90 461.5,272.27 462.5,272.64 463.5,273.03 464.5,273.43 465.5,273.84 466.5,274.26 467.5,274.69 468.5,275.14 469.5,275.59 470.5,276.06 471.5,276.53 472.5,277.02 473.5,277.52 474.5,278.03 475.5,278.55 476.5,279.08 477.5,279.62 478.5,280.17 479.5,280.73 480.5,281.30 481.5,281.88 482.5,282.47 483.5,283.07 484.5,283.68 485.5,284.31 486.5,284.94 487.5,285.58 488.5,286.22 489.5,286.88 490.5,287.55 491.5,288.23 492.5,288.91 493.5,289.61 494.5,290.31 495.5,291.03 496.5,291.75 497.5,292.48 498.5,293.21 499.5,293.96 500.5,294.71 501.5,295.48 502.5,296.25 503.5,297.03 504.5,297.81 505.5,298.60 506.5,299.41 507.5,300.21 508.5,301.03 509.5,301.85 510.5,302.68 511.5,303.52 512.5,304.36 513.5,305.21 514.5,306.07 515.5,306.93 516.5,307.80 517.5,308.67 518.5,309.55 519.5,310.44 520.5,311.33 521.5,312.23 522.5,313.13 523.5,314.04 524.5,314.95 525.5,315.87 526.5,316.79 527.5,317.72 528.5,318.65 529.5,319.59 530.5,320.53 531.5,321.47 532.5,322.42 533.5,323.37 534.5,324.33 535.5,325.29 536.5,326.25 537.5,327.22 538.5,328.19 539.5,329.16 540.5,330.14 541.5,331.12 542.5,332.10 543.5,333.08 544.5,334.06 545.5,335.05 546.5,336.04 547.5,337.03 548.5,338.02 549.5,339.02 550.5,340.01 551.5,341.01 552.5,342.00 553.5,343.00 554.5,344.00 555.5,345.00 556.5,346.00" fill="none" stroke="#f2c200" stroke-width="2.5"/><polyline points="51.5,426.80 52.5,426.75 53.5,426.68 54.5,426.60 55.5,426.51 56.5,426.41 57.5,426.30 58.5,426.17 59.5,426.03 60.5,425.88 61.5,425.72 62.5,425.54 63.5,425.36 64.5,425.16 65.5,424.95 66.5,424.73 67.5,424.49 68.5,424.25 69.5,423.99 70.5,423.72 71.5,423.44 72.5,423.15 73.5,422.85 74.5,422.53 75.5,422.20 76.5,421.87 77.5,421.52 78.5,421.16 79.5,420.79 80.5,420.40 81.5,420.01 82.5,419.60 83.5,419.19 84.5,418.76 85.5,418.32 86.5,417.88 87.5,417.42 88.5,416.95 89.5,416.47 90.5,415.97 91.5,415.47 92.5,414.96 93.5,414.44 94.5,413.91 95.5,413.37 96.5,412.81 97.5,412.25 98.5,411.68 99.5,411.10 100.5,410.50 101.5,409.90 102.5,409.29 103.5,408.67 104.5,408.04 105.5,407.40 106.5,406.76 107.5,406.10 108.5,405.43 109.5,404.76 110.5,404.08 111.5,403.38 112.5,402.68 113.5,401.97 114.5,401.26 115.5,400.53 116.5,399.80 117.5,399.06 118.5,398.31 119.5,397.55 120.5,396.79 121.5,396.01 122.5,395.23 123.5,394.45 124.5,393.65 125.5,392.85 126.5,392.04 127.5,391.23 128.5,390.41 129.5,389.58 130.5,388.75 131.5,387.91 132.5,387.06 133.5,386.21 134.5,385.35 135.5,384.48 136.5,383.61 137.5,382.74 138.5,381.86 139.5,380.97 140.5,380.08 141.5,379.18 142.5,378.28 143.5,377.37 144.5,376.46 145.5,375.55 146.5,374.63 147.5,373.71 148.5,372.78 149.5,371.85 150.5,370.91 151.5,369.98 152.5,369.03 153.5,368.09 154.5,367.14 155.5,366.19 156.5,365.24 157.5,364.28 158.5,363.32 159.5,362.36 160.5,361.39 161.5,360.43 162.5,359.46 163.5,358.49 164.5,357.52 165.5,356.55 166.5,355.57 167.5,354.60 168.5,353.62 169.5,352.64 170.5,351.66 171.5,350.68 172.5,349.71 173.5,348.73 174.5,347.75 175.5,346.76 176.5,345.78 177.5,344.81 178.5,343.83 179.5,342.85 180.5,341.87 181.5,340.89 182.5,339.92 183.5,338.94 184.5,337.97 185.5,336.99 186.5,336.02 187.5,335.05 188.5,334.09 189.5,333.12 190.5,332.16 191.5,331.20 192.5,330.24 193.5,329.29 194.5,328.33 195.5,327.38 196.5,326.44 197.5,325.49 198.5,324.55 199.5,323.62 200.5,322.68 201.5,321.76 202.5,320.83 203.5,319.91 204.5,318.99 205.5,318.08 206.5,317.17 207.5,316.27 208.5,315.37 209.5,314.48 210.5,313.59 211.5,312.70 212.5,311.82 213.5,310.95 214.5,310.08 215.5,309.22 216.5,308.37 217.5,307.52 218.5,306.67 219.5,305.84 220.5,305.01 221.5,304.18 222.5,303.36 223.5,302.55 224.5,301.75 225.5,300.95 226.5,300.16 227.5,299.38 228.5,298.60 229.5,297.83 230.5,297.07 231.5,296.32 232.5,295.57 233.5,294.83 234.5,294.10 235.5,293.38 236.5,292.67 237.5,291.97 238.5,291.27 239.5,290.58 240.5,289.90 241.5,289.23 242.5,288.57 243.5,287.92 244.5,287.28 245.5,286.64 246.5,286.02 247.5,285.40 248.5,284.79 249.5,284.20 250.5,283.61 251.5,283.03 252.5,282.47 253.5,281.91 254.5,281.36 255.5,280.83 256.5,280.30 257.5,279.78 258.5,279.27 259.5,278.78 260.5,278.29 261.5,277.82 262.5,277.35 263.5,276.90 264.5,276.46 265.5,276.02 266.5,275.60 267.5,275.19 268.5,274.79 269.5,274.40 270.5,274.03 271.5,273.66 272.5,273.31 273.5,272.96 274.5,272.63 275.5,272.31 276.5,272.00 277.5,271.70 278.5,271.42 279.5,271.14 280.5,270.88 281.5,270.63 282.5,270.39 283.5,270.16 284.5,269.95 285.5,269.74 286.5,269.55 287.5,269.37 288.5,269.20 289.5,269.04 290.5,268.90 291.5,268.77 292.5,268.65 293.5,268.54 294.5,268.44 295.5,268.36 296.5,268.28 297.5,268.22 298.5,268.17 299.5,268.14 300.5,268.11 301.5,268.10 302.5,268.10 303.5,268.11 304.5,268.14 305.5,268.17 306.5,268.22 307.5,268.28 308.5,268.36 309.5,268.44 310.5,268.54 311.5,268.65 312.5,268.77 313.5,268.90 314.5,269.04 315.5,269.20 316.5,269.37 317.5,269.55 318.5,269.74 319.5,269.95 320.5,270.16 321.5,270.39 322.5,270.63 323.5,270.88 324.5,271.14 325.5,271.42 326.5,271.70 327.5,272.00 328.5,272.31 329.5,272.63 330.5,272.96 331.5,273.31 332.5,273.66 333.5,274.03 334.5,274.40 335.5,274.79 336.5,275.19 337.5,275.60 338.5,276.02 339.5,276.46 340.5,276.90 341.5,277.35 342.5,277.82 343.5,278.29 344.5,278.78 345.5,279.27 346.5,279.78 347.5,280.30 348.5,280.83 349.5,281.36 350.5,281.91 351.5,282.47 352.5,283.03 353.5,283.61 354.5,284.20 355.5,284.79 356.5,285.40 357.5,286.02 358.5,286.64 359.5,287.28 360.5,287.92 361.5,288.57 362.5,289.23 363.5,289.90 364.5,290.58 365.5,291.27 366.5,291.97 367.5,292.67 368.5,293.38 369.5,294.10 370.5,294.83 371.5,295.57 372.5,296.32 373.5,297.07 374.5,297.83 375.5,298.60 376.5,299.38 377.5,300.16 378.5,300.95 379.5,301.75 380.5,302.55 381.5,303.36 382.5,304.18 383.5,305.01 384.5,305.84 385.5,306.67 386.5,307.52 387.5,308.37 388.5,309.22 389.5,310.08 390.5,310.95 391.5,311.82 392.5,312.70 393.5,313.59 394.5,314.48 395.5,315.37 396.5,316.27 397.5,317.17 398.5,318.08 399.5,318.99 400.5,319.91 401.5,320.83 402.5,321.76 403.5,322.68 404.5,323.62 405.5,324.55 406.5,325.49 407.5,326.44 408.5,327.38 409.5,328.33 410.5,329.29 411.5,330.24 412.5,331.20 413.5,332.16 414.5,333.12 415.5,334.09 416.5,335.05 417.5,336.02 418.5,336.99 419.5,337.97 420.5,338.94 421.5,339.92 422.5,340.89 423.5,341.87 424.5,342.85 425.5,343.83 426.5,344.81 427.5,345.78 428.5,346.76 429.5,347.75 430.5,348.73 431.5,349.71 432.5,350.68 433.5,351.66 434.5,352.64 435.5,353.62 436.5,354.60 437.5,355.57 438.5,356.55 439.5,357.52 440.5,358.49 441.5,359.46 442.5,360.43 443.5,361.39 444.5,362.36 445.5,363.32 446.5,364.28 447.5,365.24 448.5,366.19 449.5,367.14 450.5,368.09 451.5,369.03 452.5,369.98 453.5,370.91 454.5,371.85 455.5,372.78 456.5,373.71 457.5,374.63 458.5,375.55 459.5,376.46 460.5,377.37 461.5,378.28 462.5,379.18 463.5,380.08 464.5,380.97 465.5,381.86 466.5,382.74 467.5,383.61 468.5,384.48 469.5,385.35 470.5,386.21 471.5,387.06 472.5,387.91 473.5,388.75 474.5,389.58 475.5,390.41 476.5,391.23 477.5,392.04 478.5,392.85 479.5,393.65 480.5,394.45 481.5,395.23 482.5,396.01 483.5,396.79 484.5,397.55 485.5,398.31 486.5,399.06 487.5,399.80 488.5,400.53 489.5,401.26 490.5,401.97 491.5,402.68 492.5,403.38 493.5,404.08 494.5,404.76 495.5,405.43 496.5,406.10 497.5,406.76 498.5,407.40 499.5,408.04 500.5,408.67 501.5,409.29 502.5,409.90 503.5,410.50 504.5,411.10 505.5,411.68 506.5,412.25 507.5,412.81 508.5,413.37 509.5,413.91 510.5,414.44 511.5,414.96 512.5,415.47 513.5,415.97 514.5,416.47 515.5,416.95 516.5,417.42 517.5,417.88 518.5,418.32 519.5,418.76 520.5,419.19 521.5,419.60 522.5,420.01 523.5,420.40 524.5,420.79 525.5,421.16 526.5,421.52 527.5,421.87 528.5,422.20 529.5,422.53 530.5,422.85 531.5,423.15 532.5,423.44 533.5,423.72 534.5,423.99 535.5,424.25 536.5,424.49 537.5,424.73 538.5,424.95 539.5,425.16 540.5,425.36 541.5,425.54 542.5,425.72 543.5,425.88 544.5,426.03 545.5,426.17 546.5,426.30 547.5,426.41 548.5,426.51 549.5,426.60 550.5,426.68 551.5,426.75 552.5,426.80 553.5,426.85 554.5,426.88 555.5,426.89 556.5,426.90" fill="none" stroke="#08587a" stroke-width="2.2" transform="translate(0.9 0.9)"/><polyline points="51.5,426.80 52.5,426.75 53.5,426.68 54.5,426.60 55.5,426.51 56.5,426.41 57.5,426.30 58.5,426.17 59.5,426.03 60.5,425.88 61.5,425.72 62.5,425.54 63.5,425.36 64.5,425.16 65.5,424.95 66.5,424.73 67.5,424.49 68.5,424.25 69.5,423.99 70.5,423.72 71.5,423.44 72.5,423.15 73.5,422.85 74.5,422.53 75.5,422.20 76.5,421.87 77.5,421.52 78.5,421.16 79.5,420.79 80.5,420.40 81.5,420.01 82.5,419.60 83.5,419.19 84.5,418.76 85.5,418.32 86.5,417.88 87.5,417.42 88.5,416.95 89.5,416.47 90.5,415.97 91.5,415.47 92.5,414.96 93.5,414.44 94.5,413.91 95.5,413.37 96.5,412.81 97.5,412.25 98.5,411.68 99.5,411.10 100.5,410.50 101.5,409.90 102.5,409.29 103.5,408.67 104.5,408.04 105.5,407.40 106.5,406.76 107.5,406.10 108.5,405.43 109.5,404.76 110.5,404.08 111.5,403.38 112.5,402.68 113.5,401.97 114.5,401.26 115.5,400.53 116.5,399.80 117.5,399.06 118.5,398.31 119.5,397.55 120.5,396.79 121.5,396.01 122.5,395.23 123.5,394.45 124.5,393.65 125.5,392.85 126.5,392.04 127.5,391.23 128.5,390.41 129.5,389.58 130.5,388.75 131.5,387.91 132.5,387.06 133.5,386.21 134.5,385.35 135.5,384.48 136.5,383.61 137.5,382.74 138.5,381.86 139.5,380.97 140.5,380.08 141.5,379.18 142.5,378.28 143.5,377.37 144.5,376.46 145.5,375.55 146.5,374.63 147.5,373.71 148.5,372.78 149.5,371.85 150.5,370.91 151.5,369.98 152.5,369.03 153.5,368.09 154.5,367.14 155.5,366.19 156.5,365.24 157.5,364.28 158.5,363.32 159.5,362.36 160.5,361.39 161.5,360.43 162.5,359.46 163.5,358.49 164.5,357.52 165.5,356.55 166.5,355.57 167.5,354.60 168.5,353.62 169.5,352.64 170.5,351.66 171.5,350.68 172.5,349.71 173.5,348.73 174.5,347.75 175.5,346.76 176.5,345.78 177.5,344.81 178.5,343.83 179.5,342.85 180.5,341.87 181.5,340.89 182.5,339.92 183.5,338.94 184.5,337.97 185.5,336.99 186.5,336.02 187.5,335.05 188.5,334.09 189.5,333.12 190.5,332.16 191.5,331.20 192.5,330.24 193.5,329.29 194.5,328.33 195.5,327.38 196.5,326.44 197.5,325.49 198.5,324.55 199.5,323.62 200.5,322.68 201.5,321.76 202.5,320.83 203.5,319.91 204.5,318.99 205.5,318.08 206.5,317.17 207.5,316.27 208.5,315.37 209.5,314.48 210.5,313.59 211.5,312.70 212.5,311.82 213.5,310.95 214.5,310.08 215.5,309.22 216.5,308.37 217.5,307.52 218.5,306.67 219.5,305.84 220.5,305.01 221.5,304.18 222.5,303.36 223.5,302.55 224.5,301.75 225.5,300.95 226.5,300.16 227.5,299.38 228.5,298.60 229.5,297.83 230.5,297.07 231.5,296.32 232.5,295.57 233.5,294.83 234.5,294.10 235.5,293.38 236.5,292.67 237.5,291.97 238.5,291.27 239.5,290.58 240.5,289.90 241.5,289.23 242.5,288.57 243.5,287.92 244.5,287.28 245.5,286.64 246.5,286.02 247.5,285.40 248.5,284.79 249.5,284.20 250.5,283.61 251.5,283.03 252.5,282.47 253.5,281.91 254.5,281.36 255.5,280.83 256.5,280.30 257.5,279.78 258.5,279.27 259.5,278.78 260.5,278.29 261.5,277.82 262.5,277.35 263.5,276.90 264.5,276.46 265.5,276.02 266.5,275.60 267.5,275.19 268.5,274.79 269.5,274.40 270.5,274.03 271.5,273.66 272.5,273.31 273.5,272.96 274.5,272.63 275.5,272.31 276.5,272.00 277.5,271.70 278.5,271.42 279.5,271.14 280.5,270.88 281.5,270.63 282.5,270.39 283.5,270.16 284.5,269.95 285.5,269.74 286.5,269.55 287.5,269.37 288.5,269.20 289.5,269.04 290.5,268.90 291.5,268.77 292.5,268.65 293.5,268.54 294.5,268.44 295.5,268.36 296.5,268.28 297.5,268.22 298.5,268.17 299.5,268.14 300.5,268.11 301.5,268.10 302.5,268.10 303.5,268.11 304.5,268.14 305.5,268.17 306.5,268.22 307.5,268.28 308.5,268.36 309.5,268.44 310.5,268.54 311.5,268.65 312.5,268.77 313.5,268.90 314.5,269.04 315.5,269.20 316.5,269.37 317.5,269.55 318.5,269.74 319.5,269.95 320.5,270.16 321.5,270.39 322.5,270.63 323.5,270.88 324.5,271.14 325.5,271.42 326.5,271.70 327.5,272.00 328.5,272.31 329.5,272.63 330.5,272.96 331.5,273.31 332.5,273.66 333.5,274.03 334.5,274.40 335.5,274.79 336.5,275.19 337.5,275.60 338.5,276.02 339.5,276.46 340.5,276.90 341.5,277.35 342.5,277.82 343.5,278.29 344.5,278.78 345.5,279.27 346.5,279.78 347.5,280.30 348.5,280.83 349.5,281.36 350.5,281.91 351.5,282.47 352.5,283.03 353.5,283.61 354.5,284.20 355.5,284.79 356.5,285.40 357.5,286.02 358.5,286.64 359.5,287.28 360.5,287.92 361.5,288.57 362.5,289.23 363.5,289.90 364.5,290.58 365.5,291.27 366.5,291.97 367.5,292.67 368.5,293.38 369.5,294.10 370.5,294.83 371.5,295.57 372.5,296.32 373.5,297.07 374.5,297.83 375.5,298.60 376.5,299.38 377.5,300.16 378.5,300.95 379.5,301.75 380.5,302.55 381.5,303.36 382.5,304.18 383.5,305.01 384.5,305.84 385.5,306.67 386.5,307.52 387.5,308.37 388.5,309.22 389.5,310.08 390.5,310.95 391.5,311.82 392.5,312.70 393.5,313.59 394.5,314.48 395.5,315.37 396.5,316.27 397.5,317.17 398.5,318.08 399.5,318.99 400.5,319.91 401.5,320.83 402.5,321.76 403.5,322.68 404.5,323.62 405.5,324.55 406.5,325.49 407.5,326.44 408.5,327.38 409.5,328.33 410.5,329.29 411.5,330.24 412.5,331.20 413.5,332.16 414.5,333.12 415.5,334.09 416.5,335.05 417.5,336.02 418.5,336.99 419.5,337.97 420.5,338.94 421.5,339.92 422.5,340.89 423.5,341.87 424.5,342.85 425.5,343.83 426.5,344.81 427.5,345.78 428.5,346.76 429.5,347.75 430.5,348.73 431.5,349.71 432.5,350.68 433.5,351.66 434.5,352.64 435.5,353.62 436.5,354.60 437.5,355.57 438.5,356.55 439.5,357.52 440.5,358.49 441.5,359.46 442.5,360.43 443.5,361.39 444.5,362.36 445.5,363.32 446.5,364.28 447.5,365.24 448.5,366.19 449.5,367.14 450.5,368.09 451.5,369.03 452.5,369.98 453.5,370.91 454.5,371.85 455.5,372.78 456.5,373.71 457.5,374.63 458.5,375.55 459.5,376.46 460.5,377.37 461.5,378.28 462.5,379.18 463.5,380.08 464.5,380.97 465.5,381.86 466.5,382.74 467.5,383.61 468.5,384.48 469.5,385.35 470.5,386.21 471.5,387.06 472.5,387.91 473.5,388.75 474.5,389.58 475.5,390.41 476.5,391.23 477.5,392.04 478.5,392.85 479.5,393.65 480.5,394.45 481.5,395.23 482.5,396.01 483.5,396.79 484.5,397.55 485.5,398.31 486.5,399.06 487.5,399.80 488.5,400.53 489.5,401.26 490.5,401.97 491.5,402.68 492.5,403.38 493.5,404.08 494.5,404.76 495.5,405.43 496.5,406.10 497.5,406.76 498.5,407.40 499.5,408.04 500.5,408.67 501.5,409.29 502.5,409.90 503.5,410.50 504.5,411.10 505.5,411.68 506.5,412.25 507.5,412.81 508.5,413.37 509.5,413.91 510.5,414.44 511.5,414.96 512.5,415.47 513.5,415.97 514.5,416.47 515.5,416.95 516.5,417.42 517.5,417.88 518.5,418.32 519.5,418.76 520.5,419.19 521.5,419.60 522.5,420.01 523.5,420.40 524.5,420.79 525.5,421.16 526.5,421.52 527.5,421.87 528.5,422.20 529.5,422.53 530.5,422.85 531.5,423.15 532.5,423.44 533.5,423.72 534.5,423.99 535.5,424.25 536.5,424.49 537.5,424.73 538.5,424.95 539.5,425.16 540.5,425.36 541.5,425.54 542.5,425.72 543.5,425.88 544.5,426.03 545.5,426.17 546.5,426.30 547.5,426.41 548.5,426.51 549.5,426.60 550.5,426.68 551.5,426.75 552.5,426.80 553.5,426.85 554.5,426.88 555.5,426.89 556.5,426.90" fill="none" stroke="#10b0e8" stroke-width="2.3"/><rect x="558" y="266" width="21" height="2" fill="#f2c200"/><rect x="558" y="428" width="21" height="2" fill="#f2c200"/><rect x="558" y="268" width="10" height="1.2" fill="#10b0e8"/><rect x="558" y="426.8" width="12" height="1.2" fill="#10b0e8"/><polygon points="579,268 566.0,268 566.8,269 567.7,270 568.5,271 569.3,272 570.1,273 571.0,274 571.8,275 572.6,276 573.5,277 574.3,278 574.3,279 574.3,280 574.3,281 574.3,282 574.3,283 574.3,284 574.3,285 574.3,286 574.3,287 574.3,288 574.3,289 574.3,290 574.3,291 574.3,292 574.3,293 574.3,294 574.3,295 574.3,296 574.3,297 574.3,298 574.3,299 574.3,300 574.3,301 574.3,302 574.3,303 574.3,304 574.3,305 574.3,306 574.3,307 574.3,308 574.3,309 574.3,310 574.3,311 574.3,312 574.3,313 574.3,314 574.3,315 574.3,316 574.3,317 574.3,318 574.3,319 574.3,320 574.3,321 574.3,322 574.3,323 574.3,324 574.3,325 574.3,326 574.3,327 574.3,328 574.3,329 574.3,330 574.3,331 574.3,332 574.3,333 574.3,334 574.3,335 574.3,336 574.3,337 574.3,338 574.3,339 574.3,340 574.3,341 574.3,342 574.3,343 574.3,344 574.3,345 574.3,346 574.3,347 574.3,348 574.3,349 574.3,350 574.3,351 574.3,352 574.3,353 574.3,354 574.3,355 574.3,356 574.3,357 574.3,358 574.3,359 574.3,360 574.3,361 574.3,362 574.3,363 574.3,364 574.3,365 574.3,366 574.3,367 574.3,368 574.3,369 574.3,370 574.3,371 574.3,372 574.3,373 574.3,374 574.3,375 574.3,376 574.3,377 574.3,378 574.3,379 574.3,380 574.3,381 574.3,382 574.3,383 574.3,384 574.3,385 574.3,386 574.3,387 574.3,388 574.3,389 574.3,390 574.3,391 574.3,392 574.3,393 574.3,394 574.3,395 574.3,396 574.3,397 574.3,398 574.3,399 574.3,400 574.3,401 574.3,402 574.3,403 574.3,404 574.3,405 574.3,406 574.3,407 574.3,408 574.3,409 574.3,410 574.3,411 574.3,412 574.3,413 574.3,414 574.3,415 574.3,416 574.3,417 574.3,418 573.8,419 573.3,420 572.8,421 572.3,422 571.8,423 571.3,424 570.8,425 570.3,426 569.8,427 569.3,428 579,428" fill="#1eb4dc"/><rect x="567.7" y="270" width="1" height="1" fill="#f2c200"/><rect x="567.0" y="271" width="1" height="1" fill="#f2c200"/><rect x="568.3" y="272" width="1" height="1" fill="#f2c200"/><rect x="569.1" y="273" width="2" height="1" fill="#f2c200"/><rect x="571.0" y="274" width="1" height="1" fill="#f2c200"/><rect x="568.8" y="275" width="2.5" height="1" fill="#f2c200"/><rect x="570.5" y="277" width="2.5" height="1" fill="#f2c200"/><rect x="571.8" y="278" width="2" height="1" fill="#f2c200"/><rect x="573.8" y="280" width="1" height="1" fill="#f2c200"/><rect x="571.3" y="281" width="2.5" height="1" fill="#f2c200"/><rect x="571.8" y="282" width="2.5" height="1" fill="#f2c200"/><rect x="571.8" y="283" width="2.5" height="1" fill="#f2c200"/><rect x="571.3" y="284" width="2.5" height="1" fill="#f2c200"/><rect x="571.8" y="285" width="2.5" height="1" fill="#f2c200"/><rect x="572.8" y="286" width="2.5" height="1" fill="#f2c200"/><rect x="572.8" y="288" width="2" height="1" fill="#f2c200"/><rect x="573.3" y="289" width="1" height="1" fill="#f2c200"/><rect x="573.8" y="290" width="1.5" height="1" fill="#f2c200"/><rect x="572.8" y="293" width="1" height="1" fill="#f2c200"/><rect x="573.8" y="294" width="1" height="1" fill="#f2c200"/><rect x="573.3" y="295" width="2" height="1" fill="#f2c200"/><rect x="570.8" y="296" width="3" height="1" fill="#f2c200"/><rect x="573.3" y="298" width="1.5" height="1" fill="#f2c200"/><rect x="572.8" y="299" width="2.5" height="1" fill="#f2c200"/><rect x="571.8" y="300" width="2" height="1" fill="#f2c200"/><rect x="570.8" y="303" width="3" height="1" fill="#f2c200"/><rect x="571.8" y="304" width="3" height="1" fill="#f2c200"/><rect x="572.3" y="305" width="3" height="1" fill="#f2c200"/><rect x="572.8" y="306" width="2" height="1" fill="#f2c200"/><rect x="572.8" y="307" width="2" height="1" fill="#f2c200"/><rect x="574.3" y="308" width="1" height="1" fill="#f2c200"/><rect x="572.8" y="309" width="1.5" height="1" fill="#f2c200"/><rect x="571.8" y="311" width="2" height="1" fill="#f2c200"/><rect x="572.8" y="312" width="2" height="1" fill="#f2c200"/><rect x="572.8" y="316" width="2" height="1" fill="#f2c200"/><rect x="572.3" y="317" width="2" height="1" fill="#f2c200"/><rect x="573.3" y="318" width="1" height="1" fill="#f2c200"/><rect x="572.8" y="319" width="1" height="1" fill="#f2c200"/><rect x="571.8" y="320" width="2.5" height="1" fill="#f2c200"/><rect x="573.3" y="321" width="1" height="1" fill="#f2c200"/><rect x="573.3" y="322" width="1.5" height="1" fill="#f2c200"/><rect x="571.3" y="324" width="2.5" height="1" fill="#f2c200"/><rect x="572.3" y="325" width="3" height="1" fill="#f2c200"/><rect x="571.8" y="326" width="2" height="1" fill="#f2c200"/><rect x="571.8" y="327" width="2" height="1" fill="#f2c200"/><rect x="574.3" y="328" width="1" height="1" fill="#f2c200"/><rect x="572.3" y="329" width="1.5" height="1" fill="#f2c200"/><rect x="571.8" y="330" width="2.5" height="1" fill="#f2c200"/><rect x="572.3" y="331" width="1.5" height="1" fill="#f2c200"/><rect x="574.3" y="332" width="1" height="1" fill="#f2c200"/><rect x="573.3" y="333" width="1.5" height="1" fill="#f2c200"/><rect x="571.8" y="334" width="2" height="1" fill="#f2c200"/><rect x="573.3" y="335" width="2" height="1" fill="#f2c200"/><rect x="572.3" y="336" width="1.5" height="1" fill="#f2c200"/><rect x="571.8" y="337" width="3" height="1" fill="#f2c200"/><rect x="571.3" y="339" width="3" height="1" fill="#f2c200"/><rect x="573.8" y="340" width="1" height="1" fill="#f2c200"/><rect x="571.3" y="341" width="2.5" height="1" fill="#f2c200"/><rect x="570.8" y="343" width="3" height="1" fill="#f2c200"/><rect x="573.3" y="344" width="1.5" height="1" fill="#f2c200"/><rect x="573.8" y="346" width="1" height="1" fill="#f2c200"/><rect x="571.8" y="347" width="2.5" height="1" fill="#f2c200"/><rect x="572.8" y="351" width="2.5" height="1" fill="#f2c200"/><rect x="572.8" y="352" width="1" height="1" fill="#f2c200"/><rect x="573.8" y="354" width="1" height="1" fill="#f2c200"/><rect x="571.8" y="355" width="3" height="1" fill="#f2c200"/><rect x="572.8" y="357" width="1" height="1" fill="#f2c200"/><rect x="573.8" y="358" width="1" height="1" fill="#f2c200"/><rect x="571.3" y="359" width="2.5" height="1" fill="#f2c200"/><rect x="571.8" y="360" width="3" height="1" fill="#f2c200"/><rect x="570.8" y="362" width="3" height="1" fill="#f2c200"/><rect x="574.3" y="366" width="1" height="1" fill="#f2c200"/><rect x="572.3" y="368" width="3" height="1" fill="#f2c200"/><rect x="570.8" y="369" width="3" height="1" fill="#f2c200"/><rect x="572.8" y="371" width="1" height="1" fill="#f2c200"/><rect x="572.3" y="372" width="2" height="1" fill="#f2c200"/><rect x="572.8" y="373" width="2.5" height="1" fill="#f2c200"/><rect x="572.8" y="374" width="1.5" height="1" fill="#f2c200"/><rect x="572.8" y="375" width="1" height="1" fill="#f2c200"/><rect x="570.8" y="376" width="3" height="1" fill="#f2c200"/><rect x="574.3" y="377" width="1" height="1" fill="#f2c200"/><rect x="572.8" y="379" width="1" height="1" fill="#f2c200"/><rect x="572.8" y="380" width="1.5" height="1" fill="#f2c200"/><rect x="572.8" y="382" width="2.5" height="1" fill="#f2c200"/><rect x="571.8" y="384" width="3" height="1" fill="#f2c200"/><rect x="572.8" y="386" width="2.5" height="1" fill="#f2c200"/><rect x="572.8" y="389" width="1" height="1" fill="#f2c200"/><rect x="573.3" y="392" width="1" height="1" fill="#f2c200"/><rect x="571.3" y="393" width="2.5" height="1" fill="#f2c200"/><rect x="573.8" y="394" width="1.5" height="1" fill="#f2c200"/><rect x="571.3" y="396" width="2.5" height="1" fill="#f2c200"/><rect x="572.3" y="397" width="1.5" height="1" fill="#f2c200"/><rect x="571.3" y="399" width="2.5" height="1" fill="#f2c200"/><rect x="571.8" y="402" width="2.5" height="1" fill="#f2c200"/><rect x="573.3" y="403" width="2" height="1" fill="#f2c200"/><rect x="573.8" y="404" width="1" height="1" fill="#f2c200"/><rect x="572.3" y="407" width="2" height="1" fill="#f2c200"/><rect x="573.3" y="408" width="2" height="1" fill="#f2c200"/><rect x="571.3" y="409" width="3" height="1" fill="#f2c200"/><rect x="573.8" y="410" width="1" height="1" fill="#f2c200"/><rect x="571.8" y="413" width="3" height="1" fill="#f2c200"/><rect x="574.3" y="414" width="1" height="1" fill="#f2c200"/><rect x="574.3" y="415" width="1" height="1" fill="#f2c200"/><rect x="571.3" y="417" width="3" height="1" fill="#f2c200"/><rect x="573.3" y="418" width="2" height="1" fill="#f2c200"/><rect x="573.3" y="419" width="1" height="1" fill="#f2c200"/><rect x="570.8" y="420" width="3" height="1" fill="#f2c200"/><rect x="571.3" y="421" width="2.5" height="1" fill="#f2c200"/><rect x="572.3" y="422" width="1" height="1" fill="#f2c200"/><rect x="569.8" y="423" width="2.5" height="1" fill="#f2c200"/><rect x="569.8" y="424" width="1" height="1" fill="#f2c200"/><path d="M51.5 341.5 L63.5 347.5 L51.5 353.5 Z" fill="#00b4ff" stroke="#fff" stroke-width="1"/><path d="M558 341.2 L545.5 347.5 L558 353.8 Z" fill="#ffcc00"/><path d="M558 341.2 L545.5 347.5 L558 353.8" fill="none" stroke="#fff" stroke-width="0.9"/><path d="M297.5 145 L311.5 145 L304.5 158 Z" fill="#fff"/></svg><div class="t" style="left:7.39px;top:126.77px;font-size:12.20px;color:#18b4f8;letter-spacing:-0.600px;">C2 V</div><svg width="11" height="14" viewBox="0 0 11 14" style="position:absolute;left:56.5px;top:127.5px"><defs><linearGradient id="chv" x1="0" y1="0" x2="0" y2="1"><stop offset="0" stop-color="#c0e0ff"/><stop offset="0.45" stop-color="#3a88f0"/><stop offset="1" stop-color="#1a6ae8"/></linearGradient></defs><path d="M1.8 1.4 L9.4 6.5 L1.8 11.6" stroke="url(#chv)" stroke-width="2.9" fill="none" stroke-linecap="round"/></svg><div style="position:absolute;left:73px;top:123px;width:88px;height:22px;box-sizing:border-box;border:2px solid #00e000"></div><div class="t" style="left:73px;top:124.8px;width:88px;text-align:center;font-size:12.5px;line-height:20px;color:#fff;font-weight:bold">Trig'd</div><div style="position:absolute;left:161px;top:123px;width:24px;height:22px;box-sizing:border-box;border:1px solid #ffd000"></div><div class="t" style="left:161px;top:124.5px;width:24px;text-align:center;font-size:12px;line-height:20px;color:#f8be00;font-weight:bold">C1</div><div style="position:absolute;left:185px;top:124px;width:24px;height:21px;box-sizing:border-box;border-right:1px solid #6a6a6a"></div><div class="t" style="left:185px;top:124.5px;width:23px;text-align:center;font-size:12px;line-height:20px;color:#18b4f8;font-weight:bold">C2</div><div class="t" style="left:211.79px;top:126.56px;font-size:12.80px;color:#fff;letter-spacing:-0.143px;">8192 samples at 7.6923 MHz | 2020-</div><div class="t" style="left:8.80px;top:145.14px;font-size:12.00px;color:#18b4f8;">2.5</div><div class="t" style="left:8.80px;top:184.64px;font-size:12.00px;color:#18b4f8;">2</div><div class="t" style="left:8.56px;top:223.34px;font-size:12.00px;color:#18b4f8;">1.5</div><div class="t" style="left:8.56px;top:262.54px;font-size:12.00px;color:#18b4f8;">1</div><div class="t" style="left:9.04px;top:302.54px;font-size:12.00px;color:#18b4f8;">0.5</div><div class="t" style="left:9.04px;top:339.74px;font-size:12.00px;color:#18b4f8;">0</div><div class="t" style="left:8.92px;top:376.44px;font-size:12.00px;color:#18b4f8;">-0.5</div><div class="t" style="left:8.92px;top:416.54px;font-size:12.00px;color:#18b4f8;">-1</div><div class="t" style="left:8.92px;top:455.74px;font-size:12.00px;color:#18b4f8;">-1.5</div><div class="t" style="left:8.92px;top:494.94px;font-size:12.00px;color:#18b4f8;">-2</div><div class="t" style="left:8.92px;top:533.74px;font-size:12.00px;color:#18b4f8;">-2.5</div><div class="t" style="left:40.62px;top:554.14px;font-size:12.00px;color:#fff;letter-spacing:0.086px;">-500 us</div><div class="t" style="left:139.12px;top:554.14px;font-size:12.00px;color:#fff;letter-spacing:0.186px;">-300 us</div><div class="t" style="left:237.82px;top:554.14px;font-size:12.00px;color:#fff;letter-spacing:0.219px;">-100 us</div><div class="t" style="left:336.86px;top:554.14px;font-size:12.00px;color:#fff;letter-spacing:0.394px;">100 us</div><div class="t" style="left:436.44px;top:554.14px;font-size:12.00px;color:#fff;letter-spacing:0.158px;">300 us</div><div class="t" style="left:536.02px;top:554.14px;font-size:12.00px;color:#fff;letter-spacing:0.322px;">500 us</div><div style="position:absolute;left:8px;top:550px;width:19px;height:22px;box-sizing:border-box;border:1px solid #a8a8a8;border-radius:3px;background:linear-gradient(#fdfdfd,#eeeeee)"></div><div class="t" style="left:8px;top:552.5px;width:19px;text-align:center;font-size:13.5px;line-height:18px;color:#232629;-webkit-text-stroke:0.3px #232629">X</div><div style="position:absolute;left:29px;top:550px;width:11px;height:22px;box-sizing:border-box;border:1px solid #a8a8a8;border-radius:3px;background:linear-gradient(#fdfdfd,#eeeeee)"></div><svg width="9" height="6" viewBox="0 0 9 6" style="position:absolute;left:29.5px;top:558px"><path d="M0.2 0.2 H8.6 L4.4 5 Z" fill="#6a6e72"/></svg><svg width="18" height="18" viewBox="0 0 18 18" style="position:absolute;left:419px;top:125px">
<defs><radialGradient id="mg1" cx="0.4" cy="0.35" r="0.7"><stop offset="0" stop-color="#6a98e0"/><stop offset="1" stop-color="#143c88"/></radialGradient></defs>
<line x1="11" y1="11" x2="16.5" y2="16.5" stroke="#a8acb0" stroke-width="2.4" stroke-linecap="round"/>
<circle cx="7.5" cy="7.5" r="6.3" fill="url(#mg1)" stroke="#c8ccd0" stroke-width="1.6"/>
<text x="5.4" y="11" font-size="9" font-family="Liberation Sans" font-weight="bold" fill="#fff">1</text></svg><svg width="14" height="14" viewBox="0 0 14 14" style="position:absolute;left:443px;top:127px">
<path d="M2 1 L2 6 M2 1 L7 1 M2 1 L8 7" stroke="#1e7ae0" stroke-width="1.6" fill="none"/><rect x="0" y="8" width="13" height="5" fill="#6e6e6e"/><path d="M1.5 8v1.5 M4 8v1.5 M6.5 8v1.5 M9 8v1.5 M11.5 8v1.5" stroke="#9a9a9a" stroke-width="0.8"/></svg><svg width="14" height="14" viewBox="0 0 14 14" style="position:absolute;left:465px;top:127px">
<path d="M1.5 0 V7 M1.5 3.2 H11" stroke="#1e7ae0" stroke-width="1.5" fill="none"/><rect x="0" y="8" width="13" height="5" fill="#6e6e6e"/><path d="M1.5 8v1.5 M4 8v1.5 M6.5 8v1.5 M9 8v1.5 M11.5 8v1.5" stroke="#9a9a9a" stroke-width="0.8"/></svg><svg width="15" height="14" viewBox="0 0 15 14" style="position:absolute;left:487px;top:127px">
<path d="M1.5 0 V7 M1.5 1.2 H13.5 M1.5 4.8 H9" stroke="#1e7ae0" stroke-width="1.4" fill="none"/><rect x="0" y="8" width="13" height="5" fill="#6e6e6e"/><path d="M1.5 8v1.5 M4 8v1.5 M6.5 8v1.5 M9 8v1.5 M11.5 8v1.5" stroke="#9a9a9a" stroke-width="0.8"/></svg><svg width="18" height="18" viewBox="0 0 18 18" style="position:absolute;left:510px;top:125px">
<defs><radialGradient id="mg2" cx="0.4" cy="0.35" r="0.7"><stop offset="0" stop-color="#6a98e0"/><stop offset="1" stop-color="#143c88"/></radialGradient></defs>
<line x1="11" y1="11" x2="16.5" y2="16.5" stroke="#a8acb0" stroke-width="2.4" stroke-linecap="round"/>
<circle cx="7.5" cy="7.5" r="6.3" fill="url(#mg2)" stroke="#c8ccd0" stroke-width="1.6"/>
<path d="M4 6 V4.5 H6 M9 4.5 H11 V6 M11 9 V10.5 H9 M6 10.5 H4 V9" stroke="#cfe0ff" stroke-width="0.9" fill="none"/></svg><div style="position:absolute;left:533px;top:123px;width:25px;height:22px;box-sizing:border-box;border:1px solid #a8a8a8;border-radius:3px;background:linear-gradient(#fafafa,#ececec)"></div><svg width="17" height="17" viewBox="0 0 17 17" style="position:absolute;left:537px;top:125px"><defs><linearGradient id="gh" x1="0.1" y1="0" x2="0.9" y2="1"><stop offset="0" stop-color="#f4f5f6"/><stop offset="0.5" stop-color="#c8cbce"/><stop offset="1" stop-color="#8c9094"/></linearGradient></defs><g transform="translate(0.5 0.7)"><path d="M5.87 -1.41 L7.92 -1.06 L7.92 1.06 L5.87 1.41 L5.15 3.15 L6.35 4.85 L4.85 6.35 L3.15 5.15 L1.41 5.87 L1.06 7.92 L-1.06 7.92 L-1.41 5.87 L-3.15 5.15 L-4.85 6.35 L-6.35 4.85 L-5.15 3.15 L-5.87 1.41 L-7.92 1.06 L-7.92 -1.06 L-5.87 -1.41 L-5.15 -3.15 L-6.35 -4.85 L-4.85 -6.35 L-3.15 -5.15 L-1.41 -5.87 L-1.06 -7.92 L1.06 -7.92 L1.41 -5.87 L3.15 -5.15 L4.85 -6.35 L6.35 -4.85 L5.15 -3.15Z" transform="translate(8.50 8.50) rotate(-32) scale(0.86 1)" fill="#5e6266" opacity="0.8"/></g><path d="M5.87 -1.41 L7.92 -1.06 L7.92 1.06 L5.87 1.41 L5.15 3.15 L6.35 4.85 L4.85 6.35 L3.15 5.15 L1.41 5.87 L1.06 7.92 L-1.06 7.92 L-1.41 5.87 L-3.15 5.15 L-4.85 6.35 L-6.35 4.85 L-5.15 3.15 L-5.87 1.41 L-7.92 1.06 L-7.92 -1.06 L-5.87 -1.41 L-5.15 -3.15 L-6.35 -4.85 L-4.85 -6.35 L-3.15 -5.15 L-1.41 -5.87 L-1.06 -7.92 L1.06 -7.92 L1.41 -5.87 L3.15 -5.15 L4.85 -6.35 L6.35 -4.85 L5.15 -3.15Z" transform="translate(8.50 8.50) rotate(-32) scale(0.86 1)" fill="url(#gh)" stroke="#9a9ea2" stroke-width="0.6" stroke-linejoin="round"/><g transform="translate(8.50 8.50) rotate(-32) scale(0.86 1)"><ellipse cx="0" cy="0" rx="2.89" ry="3.32" fill="#3c4852"/><ellipse cx="1.10" cy="-0.14" rx="1.30" ry="2.46" fill="#f2f4f6"/></g></svg><div style="position:absolute;left:557px;top:123px;width:24px;height:22px;box-sizing:border-box;border:1px solid #a8a8a8;border-radius:2px;background:linear-gradient(#fbfbfb,#eeeeee)"></div><div class="t" style="left:560px;top:126px;width:22px;text-align:center;font-size:13.5px;line-height:18px;color:#1a2440;font-weight:bold">Y</div><div style="position:absolute;left:580px;top:123px;width:199px;height:449px;background:#eff0f1"></div><div style="position:absolute;left:580px;top:123px;width:4px;height:449px;background:#f6f7f7"></div><div style="position:absolute;left:581px;top:123px;width:198px;height:22px;background:linear-gradient(90deg,#f8f9f9,#eeeff0)"></div><svg width="14" height="8" viewBox="0 0 14 8" style="position:absolute;left:586px;top:131.3px">
<defs><linearGradient id="ra" x1="0" y1="0" x2="0" y2="1"><stop offset="0" stop-color="#4cb04c"/><stop offset="0.5" stop-color="#a2dc98"/><stop offset="1" stop-color="#3a9a3a"/></linearGradient></defs>
<path d="M0.3 1.6 H9.2 V0.3 L13 3.8 L9.2 7.3 V6 H0.3 Z" fill="url(#ra)" stroke="#3e9a3e" stroke-width="0.5" stroke-linejoin="round"/></svg><div style="position:absolute;left:584px;top:145px;width:191px;height:427px;background:#eff0f1"></div><div style="position:absolute;left:584px;top:145px;width:177px;height:113px;background:#fdfdfd"></div><div style="position:absolute;left:584px;top:567px;width:191px;height:5px;background:#f7f8f8"></div><div style="position:absolute;left:760px;top:145px;width:18px;height:422px;background:linear-gradient(90deg,#fdfdfd 0%,#f6f6f6 40%,#e8e9ea 100%);border-left:1px solid #a8a8a8"></div><div style="position:absolute;left:761px;top:158px;width:13px;height:1px;background:#b8b8b8"></div><div style="position:absolute;left:761px;top:554px;width:13px;height:1px;background:#b8b8b8"></div><svg width="10" height="6" viewBox="0 0 10 6" style="position:absolute;left:763px;top:149px"><path d="M0.5 5.5 H9.5 L5 0.5 Z" fill="#6a6e72"/></svg><svg width="10" height="6" viewBox="0 0 10 6" style="position:absolute;left:763px;top:558px"><path d="M0.5 0.5 H9.5 L5 5.5 Z" fill="#6a6e72"/></svg><div style="position:absolute;left:588px;top:150px;width:169px;height:107px;background:#eff0f1"></div><div style="position:absolute;left:589px;top:154px;width:14px;height:14px;box-sizing:border-box;border:1px solid #a4a4a4;background:#fdfdfd;border-radius:1px"></div><svg width="14" height="14" viewBox="0 0 14 14" style="position:absolute;left:589px;top:154px"><path d="M3.2 7.9 L4.8 7.1 L6.3 9.6 L9.6 2.6 L11.2 3.1 L6.8 11.8 L5.7 11.8 Z" fill="#111"/></svg><div class="t" style="left:608.14px;top:153.50px;font-size:13.00px;color:#232629;letter-spacing:-0.292px;">Time</div><div style="position:absolute;left:732px;top:150px;width:24px;height:22px;box-sizing:border-box;border:1px solid #b8b8b8;border-radius:3px;background:linear-gradient(#fafafa,#ececec)"></div><svg width="15" height="15" viewBox="0 0 15 15" style="position:absolute;left:736.5px;top:153.5px"><defs><linearGradient id="g1" x1="0.1" y1="0" x2="0.9" y2="1"><stop offset="0" stop-color="#f4f5f6"/><stop offset="0.5" stop-color="#c8cbce"/><stop offset="1" stop-color="#8c9094"/></linearGradient></defs><g transform="translate(0.5 0.7)"><path d="M5.18 -1.24 L6.99 -0.94 L6.99 0.94 L5.18 1.24 L4.54 2.78 L5.60 4.28 L4.28 5.60 L2.78 4.54 L1.24 5.18 L0.94 6.99 L-0.94 6.99 L-1.24 5.18 L-2.78 4.54 L-4.28 5.60 L-5.60 4.28 L-4.54 2.78 L-5.18 1.24 L-6.99 0.94 L-6.99 -0.94 L-5.18 -1.24 L-4.54 -2.78 L-5.60 -4.28 L-4.28 -5.60 L-2.78 -4.54 L-1.24 -5.18 L-0.94 -6.99 L0.94 -6.99 L1.24 -5.18 L2.78 -4.54 L4.28 -5.60 L5.60 -4.28 L4.54 -2.78Z" transform="translate(7.50 7.50) rotate(-32) scale(0.86 1)" fill="#5e6266" opacity="0.8"/></g><path d="M5.18 -1.24 L6.99 -0.94 L6.99 0.94 L5.18 1.24 L4.54 2.78 L5.60 4.28 L4.28 5.60 L2.78 4.54 L1.24 5.18 L0.94 6.99 L-0.94 6.99 L-1.24 5.18 L-2.78 4.54 L-4.28 5.60 L-5.60 4.28 L-4.54 2.78 L-5.18 1.24 L-6.99 0.94 L-6.99 -0.94 L-5.18 -1.24 L-4.54 -2.78 L-5.60 -4.28 L-4.28 -5.60 L-2.78 -4.54 L-1.24 -5.18 L-0.94 -6.99 L0.94 -6.99 L1.24 -5.18 L2.78 -4.54 L4.28 -5.60 L5.60 -4.28 L4.54 -2.78Z" transform="translate(7.50 7.50) rotate(-32) scale(0.86 1)" fill="url(#g1)" stroke="#9a9ea2" stroke-width="0.6" stroke-linejoin="round"/><g transform="translate(7.50 7.50) rotate(-32) scale(0.86 1)"><ellipse cx="0" cy="0" rx="2.55" ry="2.93" fill="#3c4852"/><ellipse cx="0.97" cy="-0.13" rx="1.15" ry="2.17" fill="#f2f4f6"/></g></svg><div class="t" style="left:592.36px;top:178.80px;font-size:13.00px;color:#232629;letter-spacing:0.065px;">Position:</div><div style="position:absolute;left:656px;top:174px;width:100px;height:24px;box-sizing:border-box;border:1px solid #c0c0c0;border-radius:3px;background:#fcfcfc"></div><div style="position:absolute;left:735px;top:175px;width:20px;height:22px;background:linear-gradient(#f8f8f8,#ececec);border-left:1px solid #d0d0d0;border-radius:0 2px 2px 0"></div><svg width="10" height="6" viewBox="0 0 10 6" style="position:absolute;left:741px;top:184px"><path d="M0.5 0.5 H9 L4.75 5 Z" fill="#6a6e72"/></svg><div class="t" style="left:659.93px;top:179.04px;font-size:12.30px;color:#232629;letter-spacing:-0.385px;">0 s</div><div class="t" style="left:592.36px;top:204.80px;font-size:13.00px;color:#232629;letter-spacing:-0.390px;">Base:</div><div style="position:absolute;left:656px;top:200px;width:100px;height:24px;box-sizing:border-box;border:1px solid #c0c0c0;border-radius:3px;background:#fcfcfc"></div><div style="position:absolute;left:735px;top:201px;width:20px;height:22px;background:linear-gradient(#f8f8f8,#ececec);border-left:1px solid #d0d0d0;border-radius:0 2px 2px 0"></div><svg width="10" height="6" viewBox="0 0 10 6" style="position:absolute;left:741px;top:210px"><path d="M0.5 0.5 H9 L4.75 5 Z" fill="#6a6e72"/></svg><div class="t" style="left:659.39px;top:204.80px;font-size:13.00px;color:#232629;letter-spacing:-0.150px;">100 us/div</div><div style="position:absolute;left:590px;top:226px;width:166px;height:27px;box-sizing:border-box;border:1px solid #b0b0b0;border-radius:3px;background:linear-gradient(#dedede,#d6d6d6)"></div><svg width="10" height="16" viewBox="0 0 10 16" style="position:absolute;left:668px;top:231px">
<defs><linearGradient id="dg2" x1="0" y1="0" x2="1" y2="0"><stop offset="0" stop-color="#4aa84a"/><stop offset="0.45" stop-color="#b4e4a8"/><stop offset="1" stop-color="#3a9a3a"/></linearGradient></defs>
<path d="M2.8 0.8 H7 V10.6 H9.2 L4.9 14.8 L0.6 10.6 H2.8 Z" fill="url(#dg2)" stroke="#3c9a3c" stroke-width="0.8" stroke-linejoin="round"/></svg><svg width="15.5" height="15.5" viewBox="0 0 15.5 15.5" style="position:absolute;left:586.5px;top:262.3px"><defs><linearGradient id="g2" x1="0.1" y1="0" x2="0.9" y2="1"><stop offset="0" stop-color="#f4f5f6"/><stop offset="0.5" stop-color="#c8cbce"/><stop offset="1" stop-color="#8c9094"/></linearGradient></defs><g transform="translate(0.5 0.7)"><path d="M5.35 -1.28 L7.22 -0.97 L7.22 0.97 L5.35 1.28 L4.69 2.88 L5.79 4.42 L4.42 5.79 L2.88 4.69 L1.28 5.35 L0.97 7.22 L-0.97 7.22 L-1.28 5.35 L-2.88 4.69 L-4.42 5.79 L-5.79 4.42 L-4.69 2.88 L-5.35 1.28 L-7.22 0.97 L-7.22 -0.97 L-5.35 -1.28 L-4.69 -2.88 L-5.79 -4.42 L-4.42 -5.79 L-2.88 -4.69 L-1.28 -5.35 L-0.97 -7.22 L0.97 -7.22 L1.28 -5.35 L2.88 -4.69 L4.42 -5.79 L5.79 -4.42 L4.69 -2.88Z" transform="translate(7.75 7.75) rotate(-32) scale(0.86 1)" fill="#5e6266" opacity="0.8"/></g><path d="M5.35 -1.28 L7.22 -0.97 L7.22 0.97 L5.35 1.28 L4.69 2.88 L5.79 4.42 L4.42 5.79 L2.88 4.69 L1.28 5.35 L0.97 7.22 L-0.97 7.22 L-1.28 5.35 L-2.88 4.69 L-4.42 5.79 L-5.79 4.42 L-4.69 2.88 L-5.35 1.28 L-7.22 0.97 L-7.22 -0.97 L-5.35 -1.28 L-4.69 -2.88 L-5.79 -4.42 L-4.42 -5.79 L-2.88 -4.69 L-1.28 -5.35 L-0.97 -7.22 L0.97 -7.22 L1.28 -5.35 L2.88 -4.69 L4.42 -5.79 L5.79 -4.42 L4.69 -2.88Z" transform="translate(7.75 7.75) rotate(-32) scale(0.86 1)" fill="url(#g2)" stroke="#9a9ea2" stroke-width="0.6" stroke-linejoin="round"/><g transform="translate(7.75 7.75) rotate(-32) scale(0.86 1)"><ellipse cx="0" cy="0" rx="2.64" ry="3.03" fill="#3c4852"/><ellipse cx="1.00" cy="-0.13" rx="1.19" ry="2.24" fill="#f2f4f6"/></g></svg><div class="t" style="left:606.58px;top:262.90px;font-size:13.00px;color:#232629;letter-spacing:0.035px;">Options</div><svg width="8" height="5" viewBox="0 0 8 5" style="position:absolute;left:749px;top:268px"><path d="M0.5 0.5 H7.5 L4 4.5 Z" fill="#444"/></svg><div style="position:absolute;left:585px;top:283px;width:175px;height:25px;box-sizing:border-box;border:1px solid #b8b8b8;border-radius:3px;background:linear-gradient(#fcfcfc,#f0f0f0)"></div><svg width="16" height="16" viewBox="0 0 16 16" style="position:absolute;left:586px;top:287px">
<defs><linearGradient id="pg2" x1="0" y1="0" x2="0.4" y2="1"><stop offset="0" stop-color="#b8f0a0"/><stop offset="0.45" stop-color="#5ccc3c"/><stop offset="1" stop-color="#2ca01c"/></linearGradient></defs>
<path d="M6.1 2.2 Q6.1 1.2 7.1 1.2 H8.9 Q9.9 1.2 9.9 2.2 V6.1 H13.8 Q14.8 6.1 14.8 7.1 V8.9 Q14.8 9.9 13.8 9.9 H9.9 V13.8 Q9.9 14.8 8.9 14.8 H7.1 Q6.1 14.8 6.1 13.8 V9.9 H2.2 Q1.2 9.9 1.2 8.9 V7.1 Q1.2 6.1 2.2 6.1 H6.1 Z" fill="url(#pg2)" stroke="#44a830" stroke-width="0.4"/></svg><div class="t" style="left:606.60px;top:287.70px;font-size:13.00px;color:#232629;letter-spacing:-0.346px;">Add Channel</div><svg width="8" height="5" viewBox="0 0 8 5" style="position:absolute;left:749px;top:293px"><path d="M0.5 0.5 H7.5 L4 4.5 Z" fill="#444"/></svg><div style="position:absolute;left:585px;top:309px;width:175px;height:84px;box-sizing:border-box;border:4px solid #ffd000;border-right-width:3px;background:#eff0f1"></div><div style="position:absolute;left:589px;top:317px;width:14px;height:14px;box-sizing:border-box;border:1px solid #a4a4a4;background:#fdfdfd;border-radius:1px"></div><svg width="14" height="14" viewBox="0 0 14 14" style="position:absolute;left:589px;top:317px"><path d="M3.2 7.9 L4.8 7.1 L6.3 9.6 L9.6 2.6 L11.2 3.1 L6.8 11.8 L5.7 11.8 Z" fill="#111"/></svg><div class="t" style="left:607.75px;top:316.80px;font-size:13.00px;color:#232629;letter-spacing:-0.328px;">Channel 1 (1&#177;)</div><div style="position:absolute;left:732px;top:313px;width:24px;height:22px;box-sizing:border-box;border:1px solid #b8b8b8;border-radius:3px;background:linear-gradient(#fafafa,#ececec)"></div><svg width="15" height="15" viewBox="0 0 15 15" style="position:absolute;left:736.5px;top:316.5px"><defs><linearGradient id="g3" x1="0.1" y1="0" x2="0.9" y2="1"><stop offset="0" stop-color="#f4f5f6"/><stop offset="0.5" stop-color="#c8cbce"/><stop offset="1" stop-color="#8c9094"/></linearGradient></defs><g transform="translate(0.5 0.7)"><path d="M5.18 -1.24 L6.99 -0.94 L6.99 0.94 L5.18 1.24 L4.54 2.78 L5.60 4.28 L4.28 5.60 L2.78 4.54 L1.24 5.18 L0.94 6.99 L-0.94 6.99 L-1.24 5.18 L-2.78 4.54 L-4.28 5.60 L-5.60 4.28 L-4.54 2.78 L-5.18 1.24 L-6.99 0.94 L-6.99 -0.94 L-5.18 -1.24 L-4.54 -2.78 L-5.60 -4.28 L-4.28 -5.60 L-2.78 -4.54 L-1.24 -5.18 L-0.94 -6.99 L0.94 -6.99 L1.24 -5.18 L2.78 -4.54 L4.28 -5.60 L5.60 -4.28 L4.54 -2.78Z" transform="translate(7.50 7.50) rotate(-32) scale(0.86 1)" fill="#5e6266" opacity="0.8"/></g><path d="M5.18 -1.24 L6.99 -0.94 L6.99 0.94 L5.18 1.24 L4.54 2.78 L5.60 4.28 L4.28 5.60 L2.78 4.54 L1.24 5.18 L0.94 6.99 L-0.94 6.99 L-1.24 5.18 L-2.78 4.54 L-4.28 5.60 L-5.60 4.28 L-4.54 2.78 L-5.18 1.24 L-6.99 0.94 L-6.99 -0.94 L-5.18 -1.24 L-4.54 -2.78 L-5.60 -4.28 L-4.28 -5.60 L-2.78 -4.54 L-1.24 -5.18 L-0.94 -6.99 L0.94 -6.99 L1.24 -5.18 L2.78 -4.54 L4.28 -5.60 L5.60 -4.28 L4.54 -2.78Z" transform="translate(7.50 7.50) rotate(-32) scale(0.86 1)" fill="url(#g3)" stroke="#9a9ea2" stroke-width="0.6" stroke-linejoin="round"/><g transform="translate(7.50 7.50) rotate(-32) scale(0.86 1)"><ellipse cx="0" cy="0" rx="2.55" ry="2.93" fill="#3c4852"/><ellipse cx="0.97" cy="-0.13" rx="1.15" ry="2.17" fill="#f2f4f6"/></g></svg><div class="t" style="left:592.88px;top:342.80px;font-size:13.00px;color:#232629;letter-spacing:0.135px;">Offset:</div><div style="position:absolute;left:656px;top:338px;width:100px;height:24px;box-sizing:border-box;border:1px solid #c0c0c0;border-radius:3px;background:#fcfcfc"></div><div style="position:absolute;left:735px;top:339px;width:20px;height:22px;background:linear-gradient(#f8f8f8,#ececec);border-left:1px solid #d0d0d0;border-radius:0 2px 2px 0"></div><svg width="10" height="6" viewBox="0 0 10 6" style="position:absolute;left:741px;top:348px"><path d="M0.5 0.5 H9 L4.75 5 Z" fill="#6a6e72"/></svg><div class="t" style="left:659.93px;top:343.04px;font-size:12.30px;color:#232629;letter-spacing:-0.600px;">0 V</div><div class="t" style="left:592.36px;top:367.80px;font-size:13.00px;color:#232629;letter-spacing:-0.308px;">Range:</div><div style="position:absolute;left:656px;top:363px;width:100px;height:24px;box-sizing:border-box;border:1px solid #c0c0c0;border-radius:3px;background:#fcfcfc"></div><div style="position:absolute;left:735px;top:364px;width:20px;height:22px;background:linear-gradient(#f8f8f8,#ececec);border-left:1px solid #d0d0d0;border-radius:0 2px 2px 0"></div><svg width="10" height="6" viewBox="0 0 10 6" style="position:absolute;left:741px;top:373px"><path d="M0.5 0.5 H9 L4.75 5 Z" fill="#6a6e72"/></svg><div class="t" style="left:659.78px;top:367.80px;font-size:13.00px;color:#232629;letter-spacing:-0.190px;">500 mV/div</div><div style="position:absolute;left:585px;top:394px;width:175px;height:84px;box-sizing:border-box;border:4px solid #00b8f4;border-right-width:3px;background:#eff0f1"></div><div style="position:absolute;left:589px;top:402px;width:14px;height:14px;box-sizing:border-box;border:1px solid #a4a4a4;background:#fdfdfd;border-radius:1px"></div><svg width="14" height="14" viewBox="0 0 14 14" style="position:absolute;left:589px;top:402px"><path d="M3.2 7.9 L4.8 7.1 L6.3 9.6 L9.6 2.6 L11.2 3.1 L6.8 11.8 L5.7 11.8 Z" fill="#111"/></svg><div class="t" style="left:607.75px;top:401.80px;font-size:13.00px;color:#232629;letter-spacing:-0.328px;">Channel 2 (2&#177;)</div><div style="position:absolute;left:732px;top:398px;width:24px;height:22px;box-sizing:border-box;border:1px solid #b8b8b8;border-radius:3px;background:linear-gradient(#fafafa,#ececec)"></div><svg width="15" height="15" viewBox="0 0 15 15" style="position:absolute;left:736.5px;top:401.5px"><defs><linearGradient id="g4" x1="0.1" y1="0" x2="0.9" y2="1"><stop offset="0" stop-color="#f4f5f6"/><stop offset="0.5" stop-color="#c8cbce"/><stop offset="1" stop-color="#8c9094"/></linearGradient></defs><g transform="translate(0.5 0.7)"><path d="M5.18 -1.24 L6.99 -0.94 L6.99 0.94 L5.18 1.24 L4.54 2.78 L5.60 4.28 L4.28 5.60 L2.78 4.54 L1.24 5.18 L0.94 6.99 L-0.94 6.99 L-1.24 5.18 L-2.78 4.54 L-4.28 5.60 L-5.60 4.28 L-4.54 2.78 L-5.18 1.24 L-6.99 0.94 L-6.99 -0.94 L-5.18 -1.24 L-4.54 -2.78 L-5.60 -4.28 L-4.28 -5.60 L-2.78 -4.54 L-1.24 -5.18 L-0.94 -6.99 L0.94 -6.99 L1.24 -5.18 L2.78 -4.54 L4.28 -5.60 L5.60 -4.28 L4.54 -2.78Z" transform="translate(7.50 7.50) rotate(-32) scale(0.86 1)" fill="#5e6266" opacity="0.8"/></g><path d="M5.18 -1.24 L6.99 -0.94 L6.99 0.94 L5.18 1.24 L4.54 2.78 L5.60 4.28 L4.28 5.60 L2.78 4.54 L1.24 5.18 L0.94 6.99 L-0.94 6.99 L-1.24 5.18 L-2.78 4.54 L-4.28 5.60 L-5.60 4.28 L-4.54 2.78 L-5.18 1.24 L-6.99 0.94 L-6.99 -0.94 L-5.18 -1.24 L-4.54 -2.78 L-5.60 -4.28 L-4.28 -5.60 L-2.78 -4.54 L-1.24 -5.18 L-0.94 -6.99 L0.94 -6.99 L1.24 -5.18 L2.78 -4.54 L4.28 -5.60 L5.60 -4.28 L4.54 -2.78Z" transform="translate(7.50 7.50) rotate(-32) scale(0.86 1)" fill="url(#g4)" stroke="#9a9ea2" stroke-width="0.6" stroke-linejoin="round"/><g transform="translate(7.50 7.50) rotate(-32) scale(0.86 1)"><ellipse cx="0" cy="0" rx="2.55" ry="2.93" fill="#3c4852"/><ellipse cx="0.97" cy="-0.13" rx="1.15" ry="2.17" fill="#f2f4f6"/></g></svg><div class="t" style="left:592.88px;top:427.80px;font-size:13.00px;color:#232629;letter-spacing:0.135px;">Offset:</div><div style="position:absolute;left:656px;top:423px;width:100px;height:24px;box-sizing:border-box;border:1px solid #c0c0c0;border-radius:3px;background:#fcfcfc"></div><div style="position:absolute;left:735px;top:424px;width:20px;height:22px;background:linear-gradient(#f8f8f8,#ececec);border-left:1px solid #d0d0d0;border-radius:0 2px 2px 0"></div><svg width="10" height="6" viewBox="0 0 10 6" style="position:absolute;left:741px;top:433px"><path d="M0.5 0.5 H9 L4.75 5 Z" fill="#6a6e72"/></svg><div class="t" style="left:659.93px;top:428.04px;font-size:12.30px;color:#232629;letter-spacing:-0.600px;">0 V</div><div class="t" style="left:592.36px;top:452.80px;font-size:13.00px;color:#232629;letter-spacing:-0.308px;">Range:</div><div style="position:absolute;left:656px;top:448px;width:100px;height:24px;box-sizing:border-box;border:1px solid #c0c0c0;border-radius:3px;background:#fcfcfc"></div><div style="position:absolute;left:735px;top:449px;width:20px;height:22px;background:linear-gradient(#f8f8f8,#ececec);border-left:1px solid #d0d0d0;border-radius:0 2px 2px 0"></div><svg width="10" height="6" viewBox="0 0 10 6" style="position:absolute;left:741px;top:458px"><path d="M0.5 0.5 H9 L4.75 5 Z" fill="#6a6e72"/></svg><div class="t" style="left:659.78px;top:452.80px;font-size:13.00px;color:#232629;letter-spacing:-0.190px;">500 mV/div</div><div style="position:absolute;left:7px;top:572px;width:772px;height:1px;background:#dadada"></div><div style="position:absolute;left:342px;top:577px;width:100px;height:24px;box-sizing:border-box;border:1px solid #b8b8b8;border-radius:3px;background:linear-gradient(#fcfcfc,#f0f0f0)"></div><div class="t" style="left:348.46px;top:581.50px;font-size:13.00px;color:#232629;letter-spacing:-0.049px;">Manual Trigger</div><div style="position:absolute;left:448px;top:577px;width:183px;height:24px;box-sizing:border-box;border:1px solid #b8b8b8;border-radius:3px;background:linear-gradient(#fcfcfc,#f0f0f0)"></div><div class="t" style="left:454.56px;top:581.50px;font-size:13.00px;color:#232629;letter-spacing:-0.523px;">Discovery2 SN:210321ABDE87</div><div style="position:absolute;left:637px;top:577px;width:25px;height:24px;box-sizing:border-box;border:1px solid #b8b8b8;border-radius:3px;background:linear-gradient(#fcfcfc,#f0f0f0)"></div><svg width="19" height="12" viewBox="0 0 19 12" style="position:absolute;left:640.5px;top:584.3px">
<defs><linearGradient id="devg" x1="0" y1="0" x2="0.3" y2="1"><stop offset="0" stop-color="#e2e2e2"/><stop offset="1" stop-color="#a4a4a4"/></linearGradient></defs>
<path d="M17.2 1.6 L14.2 8.6 V10.6 L17.6 3.4 Z" fill="#6a6a6a"/>
<path d="M5.2 0.5 H16.4 Q17.8 0.5 17.2 1.8 L14.2 8.4 H1.6 Q0.2 8.4 0.9 7.2 Z" fill="url(#devg)" stroke="#9a9a9a" stroke-width="0.5"/>
<path d="M0.9 7.6 H14.2 V10.4 H2 Q0.6 10.4 0.8 9 Z" fill="#dcdcdc" stroke="#8a8a8a" stroke-width="0.5"/>
<rect x="1.5" y="8.6" width="4.5" height="0.9" fill="#60b060"/><rect x="6.5" y="8.6" width="2.2" height="0.9" fill="#e06060"/><rect x="10.5" y="8.2" width="1.5" height="0.8" fill="#e08080"/>
</svg><div style="position:absolute;left:668px;top:577px;width:88px;height:24px;box-sizing:border-box;border:1px solid #b8b8b8;border-radius:3px;background:linear-gradient(#fcfcfc,#f0f0f0)"></div><div class="t" style="left:682.48px;top:581.50px;font-size:13.00px;color:#232629;letter-spacing:-0.472px;">Status: OK</div><svg width="7" height="4" viewBox="0 0 7 4" style="position:absolute;left:747px;top:594px"><path d="M0 0 H7 L3.5 4 Z" fill="#333"/></svg><svg width="11" height="11" viewBox="0 0 11 11" style="position:absolute;left:768px;top:591px"><rect x="9" y="9" width="1" height="1" fill="#a0a0a0"/><rect x="6" y="9" width="1" height="1" fill="#a0a0a0"/><rect x="3" y="9" width="1" height="1" fill="#a0a0a0"/><rect x="0" y="9" width="1" height="1" fill="#a0a0a0"/><rect x="9" y="6" width="1" height="1" fill="#a0a0a0"/><rect x="6" y="6" width="1" height="1" fill="#a0a0a0"/><rect x="3" y="6" width="1" height="1" fill="#a0a0a0"/><rect x="9" y="3" width="1" height="1" fill="#a0a0a0"/><rect x="6" y="3" width="1" height="1" fill="#a0a0a0"/><rect x="9" y="0" width="1" height="1" fill="#a0a0a0"/></svg>
</body></html>
